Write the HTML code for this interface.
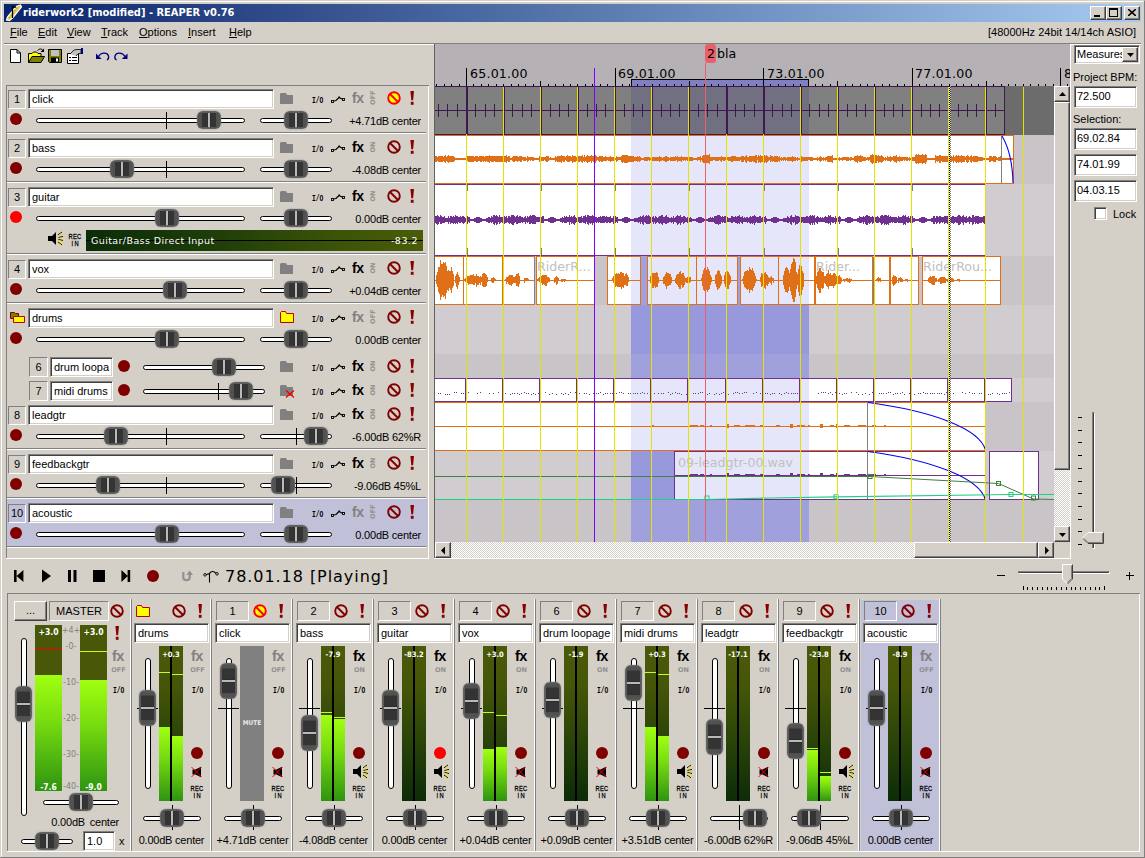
<!DOCTYPE html><html><head><meta charset="utf-8"><title>riderwork2 [modified] - REAPER v0.76</title><style>
*{box-sizing:border-box;margin:0;padding:0}
html,body{width:1145px;height:858px;overflow:hidden;background:#d4d0c8}
body{position:relative;font-family:"Liberation Sans",sans-serif;font-size:11px;color:#000;line-height:13px}
.a{position:absolute}
.t{position:absolute;white-space:pre}
.mi::first-letter{text-decoration:underline}
.fld{position:absolute;background:#fff;border:1px solid;border-color:#808080 #fff #fff #808080;box-shadow:inset 1px 1px 0 #404040,inset -1px -1px 0 #d4d0c8;padding:3px 0 0 3px;white-space:pre;overflow:hidden}
.num{position:absolute;border:1px solid;border-color:#808080 #fff #fff #808080;text-align:center;padding-top:2px}
.btn{position:absolute;background:#d4d0c8;border:1px solid;border-color:#fff #404040 #404040 #fff;box-shadow:inset -1px -1px 0 #808080,inset 1px 1px 0 #d4d0c8}
.hs{position:absolute;height:5px;background:#fff;border:1px solid #000;border-radius:3px}
.vs{position:absolute;width:6px;background:#fff;border:1px solid #000;border-radius:3px}
.kh{position:absolute;width:24px;height:18px;border-radius:6px;background:linear-gradient(180deg,#646464 0,#5c5c5c 9%,rgba(80,80,80,0) 13%,rgba(80,80,80,0) 89%,#5a5a5a 92%,#666 100%),linear-gradient(90deg,#6c6c6c 0,#545454 6%,#505050 19%,#343434 22%,#343434 43%,#262626 45%,#bababa 46.500%,#bababa 54%,#262626 55.500%,#343434 57%,#343434 77%,#505050 80%,#545454 94%,#6c6c6c 100%);box-shadow:0 0 1.500px 0 #787878}
.kv{position:absolute;width:17px;height:36px;border-radius:6px;background:linear-gradient(90deg,#646464 0,#5c5c5c 9%,rgba(80,80,80,0) 14%,rgba(80,80,80,0) 87%,#5a5a5a 91%,#666 100%),linear-gradient(180deg,#6c6c6c 0,#545454 5%,#505050 14%,#343434 17%,#343434 45%,#262626 46.500%,#bababa 47.500%,#bababa 52.500%,#262626 53.500%,#343434 55%,#343434 82%,#505050 85%,#545454 95%,#6c6c6c 100%);box-shadow:0 0 1.500px 0 #787878}
.tk{position:absolute;background:#000}
.chk{background-color:#fff;background-image:conic-gradient(#d4d0c8 25%,#fff 0 50%,#d4d0c8 0 75%,#fff 0);background-size:2px 2px}
.rec{position:absolute;width:12px;height:12px;border-radius:6px;background:#800000}
.rec.on{background:#ff0000}
.sepd{position:absolute;height:1px;background:#808080}
.sepl{position:absolute;height:1px;background:#fff}
.fx{position:absolute;font-weight:bold;font-size:14.5px;line-height:15px;letter-spacing:-0.5px;white-space:pre}
.io{position:absolute;font-family:"Liberation Mono",monospace;font-weight:bold;font-size:9.5px;line-height:10px;transform-origin:0 0;transform:scaleX(.66);white-space:pre}
.sm{position:absolute;font-family:"DejaVu Sans",sans-serif;font-weight:bold;font-size:6.5px;line-height:6px;color:#909090;white-space:pre;letter-spacing:.1px}
.ri{position:absolute;font-family:"Liberation Sans",sans-serif;font-size:8px;line-height:7px;color:#000;white-space:pre;text-align:center;width:24px;letter-spacing:.3px;-webkit-text-stroke:.3px #000;transform:scaleX(.72)}
.yl{position:absolute;width:1px;background:#e3e300}
.pk{position:absolute;font-family:"DejaVu Sans Condensed","DejaVu Sans",sans-serif;font-weight:bold;color:#fff;font-size:7.5px;line-height:8px;white-space:pre;text-align:center}
.sc{position:absolute;font-family:"DejaVu Sans",sans-serif;color:#808080;font-size:8px;line-height:8px;white-space:pre;text-align:center;width:20px}
.mt{position:absolute;background:linear-gradient(180deg,#4a5a08 0,#465608 25%,#2a4408 60%,#0c2c08 100%)}
.mg{position:absolute;background:linear-gradient(180deg,#a0ff10 0,#78dc10 40%,#2e9410 100%)}
.lb{position:absolute;font-family:"DejaVu Sans",sans-serif;font-size:12.6px;line-height:13px;white-space:pre}
</style></head><body>
<div class="a" style="left:0;top:0;width:1145px;height:858px;border:1px solid;border-color:#d4d0c8 #808080 #808080 #d4d0c8"></div>
<div class="a" style="left:1px;top:1px;width:1143px;height:856px;border:1px solid;border-color:#fff #d4d0c8 #d4d0c8 #fff"></div>
<div class="a" style="left:4px;top:4px;width:1137px;height:18px;background:linear-gradient(90deg,#0a246a 0,#a6caf0 100%)"></div>
<svg class="a" style="left:5px;top:4px" width="18" height="18" viewBox="0 0 18 18"><path d="M1.5 16 L2.5 13 L11 2.5 L15.5 1 L16.5 3 L8 13.5 L4.5 16.5 Z" fill="#e6c85a" stroke="#fff" stroke-width="1.2"/><path d="M4 14 L13 3" stroke="#9ab040" stroke-width="1.5" stroke-dasharray="1 2"/><path d="M7.5 14 V3 H11" fill="none" stroke="#000" stroke-width="1.3"/></svg>
<div class="t" style="left:23px;top:6px;font-family:DejaVu Sans Condensed,DejaVu Sans,sans-serif;font-weight:bold;color:#fff;font-size:11px;line-height:14px">riderwork2 [modified] - REAPER v0.76</div>
<div class="btn" style="left:1090px;top:6px;width:16px;height:14px"></div>
<div class="a" style="left:1094px;top:15px;width:6px;height:2px;background:#000;"></div>
<div class="btn" style="left:1106px;top:6px;width:16px;height:14px"></div>
<div class="a" style="left:1109px;top:8px;width:9px;height:9px;border:1px solid #000;border-top-width:2px"></div>
<div class="btn" style="left:1124px;top:6px;width:16px;height:14px"></div>
<svg class="a" style="left:1128px;top:9px" width="8" height="7" viewBox="0 0 8 7"><path d="M0 0 L8 7 M8 0 L0 7" stroke="#000" stroke-width="1.6" fill="none"/></svg>
<div class="t mi" style="left:10px;top:26px;">File</div>
<div class="t mi" style="left:38px;top:26px;">Edit</div>
<div class="t mi" style="left:67px;top:26px;">View</div>
<div class="t mi" style="left:101px;top:26px;">Track</div>
<div class="t mi" style="left:139px;top:26px;">Options</div>
<div class="t mi" style="left:188px;top:26px;">Insert</div>
<div class="t mi" style="left:229px;top:26px;">Help</div>
<div class="t" style="left:0px;top:26px;left:auto;right:9px">[48000Hz 24bit 14/14ch ASIO]</div>
<div class="a" style="left:4px;top:43px;width:1137px;height:1px;background:#808080;"></div>
<div class="a" style="left:4px;top:44px;width:1137px;height:1px;background:#fff;"></div>
<svg class="a" style="left:8px;top:47px" width="125" height="18" viewBox="0 0 125 18"><path d="M2.5 2.5 H9 L12.5 6 V15.5 H2.5 Z" fill="#fff" stroke="#000"/><path d="M9 2.5 V6 H12.5" fill="none" stroke="#000"/><path d="M20.500 15.500 V6.500 H24 L25.500 5 H28.500 L30 6.500 H33 V9.500" fill="#ffff00" stroke="#000"/><path d="M20.500 15.500 L24 9.500 H36.500 L33 15.500 Z" fill="#808000" stroke="#000"/><path d="M29.500 3.500 C31.500 1.500 33.500 1.500 35 3.500" stroke="#000" fill="none"/><path d="M36 1.500 V5 H32.500 Z" fill="#000"/><path d="M40.500 2.500 H53.500 V15.500 H41.500 L40.500 14.500 Z" fill="#808000" stroke="#000"/><rect x="43" y="3" width="8" height="6" fill="#c0c0c0"/><rect x="43" y="10.500" width="8" height="5" fill="#000"/><rect x="48" y="11.500" width="2" height="3" fill="#fff"/><path d="M59.500 6.500 H70.500 V16.500 H59.500 Z" fill="#fff" stroke="#000"/><path d="M61 10.500 H63 M64 10.500 H69 M61 13.500 H63 M64 13.500 H69" stroke="#000"/><path d="M62 7 L66 3 L69 2.500 H73 V6.500 H70.500 L68 9" fill="#c0c0c0" stroke="#000" stroke-width=".8"/><rect x="73" y="1" width="2" height="6" fill="#000080"/><path d="M90.500 9.500 C93 5 99.500 5 100.500 9 C101 11 100 12.500 99 13" stroke="#000080" stroke-width="1.300" fill="none"/><path d="M88 6.500 V12 H93.700 Z" fill="#000080"/><path d="M117 9.500 C114.500 5 108 5 107 9 C106.500 11 107.500 12.500 108.500 13" stroke="#000080" stroke-width="1.300" fill="none"/><path d="M119.500 6.500 V12 H113.800 Z" fill="#000080"/></svg>
<div class="a" style="left:6px;top:85px;width:423px;height:1px;background:#808080;"></div>
<div class="a" style="left:6px;top:85px;width:1px;height:474px;background:#808080;"></div>
<div class="a" style="left:428px;top:86px;width:1px;height:473px;background:#fff;"></div>
<div class="a" style="left:6px;top:558px;width:423px;height:1px;background:#fff;"></div>
<div class="num" style="left:8px;top:90px;width:18px;height:19px">1</div>
<div class="fld" style="left:28px;top:89px;width:246px;height:20px">click</div>
<svg class="a" style="left:280px;top:93px" width="14" height="12" viewBox="0 0 14 12"><path d="M0 11 V1 L1 0 H6 L7 2 H13 V11 Z" fill="#808080"/></svg>
<div class="io" style="left:312px;top:96px;">I/O</div>
<svg class="a" style="left:331px;top:96px" width="15" height="8" viewBox="0 0 15 8"><path d="M2.500 5 L5 4.500 L8 1.500 L11.500 3.200" stroke="#000" stroke-width="1.200" fill="none"/><rect x="0.500" y="4.500" width="2" height="2" fill="#d4d0c8" stroke="#000" stroke-width=".9"/><rect x="11.500" y="2.500" width="2" height="2" fill="#d4d0c8" stroke="#000" stroke-width=".9"/><rect x="7.500" y="0.500" width="1.500" height="1.500" fill="#000"/></svg>
<div class="fx" style="left:352px;top:91px;color:#808080;font-size:14px">fx</div>
<div class="sm" style="left:370px;top:91px;width:14px;height:6px;text-align:center;transform-origin:0 0;transform:translate(0,14px) rotate(-90deg)">OFF</div>
<svg class="a" style="left:385.5px;top:90px" width="16" height="16" viewBox="0 0 16 16"><circle cx="8" cy="8" r="5.8" fill="#ffff00" stroke="#ff0000" stroke-width="1.9"/><path d="M4 4 L12 12" stroke="#ff0000" stroke-width="1.9"/></svg>
<svg class="a" style="left:410px;top:91px" width="5" height="14" viewBox="0 0 5 14" preserveAspectRatio="none"><path d="M0.4 0 H4 L3.1 9.3 H1.3 Z" fill="#880000"/><rect x="0.8" y="10.8" width="2.8" height="3" fill="#880000"/></svg>
<div class="rec" style="left:10px;top:113px"></div>
<div class="hs" style="left:36px;top:118px;width:209px"></div>
<div class="tk" style="left:166px;top:112px;width:1px;height:17px"></div>
<div class="kh" style="left:197px;top:111px"></div>
<div class="hs" style="left:260px;top:118px;width:72px"></div>
<div class="kh" style="left:284px;top:111px"></div>
<div class="t" style="left:0px;top:115px;left:auto;right:724px;text-align:right;letter-spacing:-.22px">+4.71dB center</div>
<div class="a" style="left:7px;top:132px;width:419px;height:1px;background:#808080;"></div>
<div class="a" style="left:7px;top:133px;width:419px;height:1px;background:#fff;"></div>
<div class="num" style="left:8px;top:139px;width:18px;height:19px">2</div>
<div class="fld" style="left:28px;top:138px;width:246px;height:20px">bass</div>
<svg class="a" style="left:280px;top:142px" width="14" height="12" viewBox="0 0 14 12"><path d="M0 11 V1 L1 0 H6 L7 2 H13 V11 Z" fill="#808080"/></svg>
<div class="io" style="left:312px;top:145px;">I/O</div>
<svg class="a" style="left:331px;top:145px" width="15" height="8" viewBox="0 0 15 8"><path d="M2.500 5 L5 4.500 L8 1.500 L11.500 3.200" stroke="#000" stroke-width="1.200" fill="none"/><rect x="0.500" y="4.500" width="2" height="2" fill="#d4d0c8" stroke="#000" stroke-width=".9"/><rect x="11.500" y="2.500" width="2" height="2" fill="#d4d0c8" stroke="#000" stroke-width=".9"/><rect x="7.500" y="0.500" width="1.500" height="1.500" fill="#000"/></svg>
<div class="fx" style="left:352px;top:140px;color:#000;font-size:14px">fx</div>
<div class="sm" style="left:370px;top:140px;width:14px;height:6px;text-align:center;transform-origin:0 0;transform:translate(0,14px) rotate(-90deg)">ON</div>
<svg class="a" style="left:385.5px;top:139px" width="16" height="16" viewBox="0 0 16 16"><circle cx="8" cy="8" r="5.8" fill="none" stroke="#800000" stroke-width="1.9"/><path d="M4 4 L12 12" stroke="#800000" stroke-width="1.9"/></svg>
<svg class="a" style="left:410px;top:140px" width="5" height="14" viewBox="0 0 5 14" preserveAspectRatio="none"><path d="M0.4 0 H4 L3.1 9.3 H1.3 Z" fill="#880000"/><rect x="0.8" y="10.8" width="2.8" height="3" fill="#880000"/></svg>
<div class="rec" style="left:10px;top:162px"></div>
<div class="hs" style="left:36px;top:167px;width:209px"></div>
<div class="tk" style="left:166px;top:161px;width:1px;height:17px"></div>
<div class="kh" style="left:110px;top:160px"></div>
<div class="hs" style="left:260px;top:167px;width:72px"></div>
<div class="kh" style="left:284px;top:160px"></div>
<div class="t" style="left:0px;top:164px;left:auto;right:724px;text-align:right;letter-spacing:-.22px">-4.08dB center</div>
<div class="a" style="left:7px;top:181px;width:419px;height:1px;background:#808080;"></div>
<div class="a" style="left:7px;top:182px;width:419px;height:1px;background:#fff;"></div>
<div class="num" style="left:8px;top:188px;width:18px;height:19px">3</div>
<div class="fld" style="left:28px;top:187px;width:246px;height:20px">guitar</div>
<svg class="a" style="left:280px;top:191px" width="14" height="12" viewBox="0 0 14 12"><path d="M0 11 V1 L1 0 H6 L7 2 H13 V11 Z" fill="#808080"/></svg>
<div class="io" style="left:312px;top:194px;">I/O</div>
<svg class="a" style="left:331px;top:194px" width="15" height="8" viewBox="0 0 15 8"><path d="M2.500 5 L5 4.500 L8 1.500 L11.500 3.200" stroke="#000" stroke-width="1.200" fill="none"/><rect x="0.500" y="4.500" width="2" height="2" fill="#d4d0c8" stroke="#000" stroke-width=".9"/><rect x="11.500" y="2.500" width="2" height="2" fill="#d4d0c8" stroke="#000" stroke-width=".9"/><rect x="7.500" y="0.500" width="1.500" height="1.500" fill="#000"/></svg>
<div class="fx" style="left:352px;top:189px;color:#000;font-size:14px">fx</div>
<div class="sm" style="left:370px;top:189px;width:14px;height:6px;text-align:center;transform-origin:0 0;transform:translate(0,14px) rotate(-90deg)">ON</div>
<svg class="a" style="left:385.5px;top:188px" width="16" height="16" viewBox="0 0 16 16"><circle cx="8" cy="8" r="5.8" fill="none" stroke="#800000" stroke-width="1.9"/><path d="M4 4 L12 12" stroke="#800000" stroke-width="1.9"/></svg>
<svg class="a" style="left:410px;top:189px" width="5" height="14" viewBox="0 0 5 14" preserveAspectRatio="none"><path d="M0.4 0 H4 L3.1 9.3 H1.3 Z" fill="#880000"/><rect x="0.8" y="10.8" width="2.8" height="3" fill="#880000"/></svg>
<div class="rec on" style="left:10px;top:211px"></div>
<div class="hs" style="left:36px;top:216px;width:209px"></div>
<div class="kh" style="left:155px;top:209px"></div>
<div class="hs" style="left:260px;top:216px;width:72px"></div>
<div class="kh" style="left:284px;top:209px"></div>
<div class="t" style="left:0px;top:213px;left:auto;right:724px;text-align:right;letter-spacing:-.22px">0.00dB center</div>
<div class="a" style="left:7px;top:253px;width:419px;height:1px;background:#808080;"></div>
<div class="a" style="left:7px;top:254px;width:419px;height:1px;background:#fff;"></div>
<svg class="a" style="left:48px;top:231px" width="16" height="16" viewBox="0 0 16 16"><path d="M0 5 H4 L8 1 V14 L4 10 H0 Z" fill="#000"/><path d="M10 4 L14 1 M10.5 6.5 L15 5.5 M10.5 8.5 L15 9.5 M10 11 L14 14" stroke="#000" stroke-width="1"/><path d="M10 5 L14 2 M10.5 7.5 L15 6.5 M10.5 9.5 L15 10.5 M10 12 L14 15" stroke="#f0e000" stroke-width="1"/></svg>
<div class="ri" style="left:63px;top:233px">REC<br><span style="letter-spacing:2px;margin-left:2px">IN</span></div>
<div class="a" style="left:86px;top:230px;width:337px;height:21px;background:linear-gradient(90deg,#0c2c08 0,#1c3c08 35%,#3c5408 75%,#4a5c08 100%)"></div>
<div class="a" style="left:86px;top:240px;width:337px;height:1px;background:#000;"></div>
<div class="t" style="left:91px;top:235px;font-family:DejaVu Sans,sans-serif;font-size:9.5px;line-height:12px;color:#fff;letter-spacing:.4px">Guitar/Bass Direct Input</div>
<div class="t" style="left:0px;top:235px;left:auto;right:727px;font-family:DejaVu Sans,sans-serif;font-size:9.5px;line-height:12px;color:#fff;letter-spacing:.5px">-83.2</div>
<div class="num" style="left:8px;top:260px;width:18px;height:19px">4</div>
<div class="fld" style="left:28px;top:259px;width:246px;height:20px">vox</div>
<svg class="a" style="left:280px;top:263px" width="14" height="12" viewBox="0 0 14 12"><path d="M0 11 V1 L1 0 H6 L7 2 H13 V11 Z" fill="#808080"/></svg>
<div class="io" style="left:312px;top:266px;">I/O</div>
<svg class="a" style="left:331px;top:266px" width="15" height="8" viewBox="0 0 15 8"><path d="M2.500 5 L5 4.500 L8 1.500 L11.500 3.200" stroke="#000" stroke-width="1.200" fill="none"/><rect x="0.500" y="4.500" width="2" height="2" fill="#d4d0c8" stroke="#000" stroke-width=".9"/><rect x="11.500" y="2.500" width="2" height="2" fill="#d4d0c8" stroke="#000" stroke-width=".9"/><rect x="7.500" y="0.500" width="1.500" height="1.500" fill="#000"/></svg>
<div class="fx" style="left:352px;top:261px;color:#000;font-size:14px">fx</div>
<div class="sm" style="left:370px;top:261px;width:14px;height:6px;text-align:center;transform-origin:0 0;transform:translate(0,14px) rotate(-90deg)">ON</div>
<svg class="a" style="left:385.5px;top:260px" width="16" height="16" viewBox="0 0 16 16"><circle cx="8" cy="8" r="5.8" fill="none" stroke="#800000" stroke-width="1.9"/><path d="M4 4 L12 12" stroke="#800000" stroke-width="1.9"/></svg>
<svg class="a" style="left:410px;top:261px" width="5" height="14" viewBox="0 0 5 14" preserveAspectRatio="none"><path d="M0.4 0 H4 L3.1 9.3 H1.3 Z" fill="#880000"/><rect x="0.8" y="10.8" width="2.8" height="3" fill="#880000"/></svg>
<div class="rec" style="left:10px;top:283px"></div>
<div class="hs" style="left:36px;top:288px;width:209px"></div>
<div class="kh" style="left:163px;top:281px"></div>
<div class="hs" style="left:260px;top:288px;width:72px"></div>
<div class="kh" style="left:284px;top:281px"></div>
<div class="t" style="left:0px;top:285px;left:auto;right:724px;text-align:right;letter-spacing:-.22px">+0.04dB center</div>
<div class="a" style="left:7px;top:302px;width:419px;height:1px;background:#808080;"></div>
<div class="a" style="left:7px;top:303px;width:419px;height:1px;background:#fff;"></div>
<svg class="a" style="left:10px;top:312px" width="15" height="11" viewBox="0 0 15 11"><path d="M0.5 0.5 H4.5 L5.5 1.5 H8.5 V6.5 H0.5 Z" fill="#808000" stroke="#800000"/><path d="M3.5 4.5 H14.5 V10.5 H3.5 Z" fill="#ffff00" stroke="#c00000"/></svg>
<div class="fld" style="left:28px;top:308px;width:246px;height:20px">drums</div>
<svg class="a" style="left:280px;top:311px" width="14" height="12" viewBox="0 0 14 12"><path d="M0.5 11.5 V1.5 L1.5 0.5 H5.5 L6.5 2.5 H13.5 V11.5 Z" fill="#ffff00" stroke="#c00000" stroke-width="1"/></svg>
<div class="io" style="left:312px;top:315px;">I/O</div>
<svg class="a" style="left:331px;top:315px" width="15" height="8" viewBox="0 0 15 8"><path d="M2.500 5 L5 4.500 L8 1.500 L11.500 3.200" stroke="#000" stroke-width="1.200" fill="none"/><rect x="0.500" y="4.500" width="2" height="2" fill="#d4d0c8" stroke="#000" stroke-width=".9"/><rect x="11.500" y="2.500" width="2" height="2" fill="#d4d0c8" stroke="#000" stroke-width=".9"/><rect x="7.500" y="0.500" width="1.500" height="1.500" fill="#000"/></svg>
<div class="fx" style="left:352px;top:310px;color:#808080;font-size:14px">fx</div>
<div class="sm" style="left:370px;top:310px;width:14px;height:6px;text-align:center;transform-origin:0 0;transform:translate(0,14px) rotate(-90deg)">OFF</div>
<svg class="a" style="left:385.5px;top:309px" width="16" height="16" viewBox="0 0 16 16"><circle cx="8" cy="8" r="5.8" fill="none" stroke="#800000" stroke-width="1.9"/><path d="M4 4 L12 12" stroke="#800000" stroke-width="1.9"/></svg>
<svg class="a" style="left:410px;top:310px" width="5" height="14" viewBox="0 0 5 14" preserveAspectRatio="none"><path d="M0.4 0 H4 L3.1 9.3 H1.3 Z" fill="#880000"/><rect x="0.8" y="10.8" width="2.8" height="3" fill="#880000"/></svg>
<div class="rec" style="left:10px;top:332px"></div>
<div class="hs" style="left:36px;top:337px;width:209px"></div>
<div class="kh" style="left:155px;top:330px"></div>
<div class="hs" style="left:260px;top:337px;width:72px"></div>
<div class="kh" style="left:284px;top:330px"></div>
<div class="t" style="left:0px;top:334px;left:auto;right:724px;text-align:right;letter-spacing:-.22px">0.00dB center</div>
<div class="num" style="left:29px;top:357px;width:19px;height:20px;padding-top:3px">6</div>
<div class="fld" style="left:50px;top:357px;width:63px;height:20px">drum loopa</div>
<div class="rec" style="left:118px;top:360px"></div>
<div class="hs" style="left:143px;top:365px;width:122px"></div>
<div class="kh" style="left:212px;top:358px"></div>
<svg class="a" style="left:280px;top:361px" width="14" height="12" viewBox="0 0 14 12"><path d="M0 11 V1 L1 0 H6 L7 2 H13 V11 Z" fill="#808080"/></svg>
<div class="io" style="left:312px;top:364px;">I/O</div>
<svg class="a" style="left:331px;top:364px" width="15" height="8" viewBox="0 0 15 8"><path d="M2.500 5 L5 4.500 L8 1.500 L11.500 3.200" stroke="#000" stroke-width="1.200" fill="none"/><rect x="0.500" y="4.500" width="2" height="2" fill="#d4d0c8" stroke="#000" stroke-width=".9"/><rect x="11.500" y="2.500" width="2" height="2" fill="#d4d0c8" stroke="#000" stroke-width=".9"/><rect x="7.500" y="0.500" width="1.500" height="1.500" fill="#000"/></svg>
<div class="fx" style="left:352px;top:359px;color:#000;font-size:14px">fx</div>
<div class="sm" style="left:370px;top:359px;width:14px;height:6px;text-align:center;transform-origin:0 0;transform:translate(0,14px) rotate(-90deg)">ON</div>
<svg class="a" style="left:385.5px;top:358px" width="16" height="16" viewBox="0 0 16 16"><circle cx="8" cy="8" r="5.8" fill="none" stroke="#800000" stroke-width="1.9"/><path d="M4 4 L12 12" stroke="#800000" stroke-width="1.9"/></svg>
<svg class="a" style="left:410px;top:359px" width="5" height="14" viewBox="0 0 5 14" preserveAspectRatio="none"><path d="M0.4 0 H4 L3.1 9.3 H1.3 Z" fill="#880000"/><rect x="0.8" y="10.8" width="2.8" height="3" fill="#880000"/></svg>
<div class="num" style="left:29px;top:381px;width:19px;height:20px;padding-top:3px">7</div>
<div class="fld" style="left:50px;top:381px;width:63px;height:20px">midi drums</div>
<div class="rec" style="left:118px;top:384px"></div>
<div class="hs" style="left:143px;top:389px;width:122px"></div>
<div class="tk" style="left:218px;top:383px;width:1px;height:17px"></div>
<div class="kh" style="left:229px;top:382px"></div>
<svg class="a" style="left:280px;top:385px" width="14" height="12" viewBox="0 0 14 12"><path d="M0 11 V1 L1 0 H6 L7 2 H13 V11 Z" fill="#808080"/></svg>
<svg class="a" style="left:285px;top:389px" width="10" height="10" viewBox="0 0 10 10"><path d="M1 1.500 L9 8.500 M9 1.500 L1 8.500" stroke="#f00000" stroke-width="1.300"/></svg>
<div class="io" style="left:312px;top:388px;">I/O</div>
<svg class="a" style="left:331px;top:388px" width="15" height="8" viewBox="0 0 15 8"><path d="M2.500 5 L5 4.500 L8 1.500 L11.500 3.200" stroke="#000" stroke-width="1.200" fill="none"/><rect x="0.500" y="4.500" width="2" height="2" fill="#d4d0c8" stroke="#000" stroke-width=".9"/><rect x="11.500" y="2.500" width="2" height="2" fill="#d4d0c8" stroke="#000" stroke-width=".9"/><rect x="7.500" y="0.500" width="1.500" height="1.500" fill="#000"/></svg>
<div class="fx" style="left:352px;top:383px;color:#000;font-size:14px">fx</div>
<div class="sm" style="left:370px;top:383px;width:14px;height:6px;text-align:center;transform-origin:0 0;transform:translate(0,14px) rotate(-90deg)">ON</div>
<svg class="a" style="left:385.5px;top:382px" width="16" height="16" viewBox="0 0 16 16"><circle cx="8" cy="8" r="5.8" fill="none" stroke="#800000" stroke-width="1.9"/><path d="M4 4 L12 12" stroke="#800000" stroke-width="1.9"/></svg>
<svg class="a" style="left:410px;top:383px" width="5" height="14" viewBox="0 0 5 14" preserveAspectRatio="none"><path d="M0.4 0 H4 L3.1 9.3 H1.3 Z" fill="#880000"/><rect x="0.8" y="10.8" width="2.8" height="3" fill="#880000"/></svg>
<div class="num" style="left:8px;top:406px;width:18px;height:19px">8</div>
<div class="fld" style="left:28px;top:405px;width:246px;height:20px">leadgtr</div>
<svg class="a" style="left:280px;top:409px" width="14" height="12" viewBox="0 0 14 12"><path d="M0 11 V1 L1 0 H6 L7 2 H13 V11 Z" fill="#808080"/></svg>
<div class="io" style="left:312px;top:412px;">I/O</div>
<svg class="a" style="left:331px;top:412px" width="15" height="8" viewBox="0 0 15 8"><path d="M2.500 5 L5 4.500 L8 1.500 L11.500 3.200" stroke="#000" stroke-width="1.200" fill="none"/><rect x="0.500" y="4.500" width="2" height="2" fill="#d4d0c8" stroke="#000" stroke-width=".9"/><rect x="11.500" y="2.500" width="2" height="2" fill="#d4d0c8" stroke="#000" stroke-width=".9"/><rect x="7.500" y="0.500" width="1.500" height="1.500" fill="#000"/></svg>
<div class="fx" style="left:352px;top:407px;color:#000;font-size:14px">fx</div>
<div class="sm" style="left:370px;top:407px;width:14px;height:6px;text-align:center;transform-origin:0 0;transform:translate(0,14px) rotate(-90deg)">ON</div>
<svg class="a" style="left:385.5px;top:406px" width="16" height="16" viewBox="0 0 16 16"><circle cx="8" cy="8" r="5.8" fill="none" stroke="#800000" stroke-width="1.9"/><path d="M4 4 L12 12" stroke="#800000" stroke-width="1.9"/></svg>
<svg class="a" style="left:410px;top:407px" width="5" height="14" viewBox="0 0 5 14" preserveAspectRatio="none"><path d="M0.4 0 H4 L3.1 9.3 H1.3 Z" fill="#880000"/><rect x="0.8" y="10.8" width="2.8" height="3" fill="#880000"/></svg>
<div class="rec" style="left:10px;top:429px"></div>
<div class="hs" style="left:36px;top:434px;width:209px"></div>
<div class="tk" style="left:166px;top:428px;width:1px;height:17px"></div>
<div class="kh" style="left:104px;top:427px"></div>
<div class="hs" style="left:260px;top:434px;width:72px"></div>
<div class="tk" style="left:296px;top:428px;width:1px;height:17px"></div>
<div class="kh" style="left:304px;top:427px"></div>
<div class="t" style="left:0px;top:431px;left:auto;right:724px;text-align:right;letter-spacing:-.22px">-6.00dB 62%R</div>
<div class="a" style="left:7px;top:448px;width:419px;height:1px;background:#808080;"></div>
<div class="a" style="left:7px;top:449px;width:419px;height:1px;background:#fff;"></div>
<div class="num" style="left:8px;top:455px;width:18px;height:19px">9</div>
<div class="fld" style="left:28px;top:454px;width:246px;height:20px">feedbackgtr</div>
<svg class="a" style="left:280px;top:458px" width="14" height="12" viewBox="0 0 14 12"><path d="M0 11 V1 L1 0 H6 L7 2 H13 V11 Z" fill="#808080"/></svg>
<div class="io" style="left:312px;top:461px;">I/O</div>
<svg class="a" style="left:331px;top:461px" width="15" height="8" viewBox="0 0 15 8"><path d="M2.500 5 L5 4.500 L8 1.500 L11.500 3.200" stroke="#000" stroke-width="1.200" fill="none"/><rect x="0.500" y="4.500" width="2" height="2" fill="#d4d0c8" stroke="#000" stroke-width=".9"/><rect x="11.500" y="2.500" width="2" height="2" fill="#d4d0c8" stroke="#000" stroke-width=".9"/><rect x="7.500" y="0.500" width="1.500" height="1.500" fill="#000"/></svg>
<div class="fx" style="left:352px;top:456px;color:#000;font-size:14px">fx</div>
<div class="sm" style="left:370px;top:456px;width:14px;height:6px;text-align:center;transform-origin:0 0;transform:translate(0,14px) rotate(-90deg)">ON</div>
<svg class="a" style="left:385.5px;top:455px" width="16" height="16" viewBox="0 0 16 16"><circle cx="8" cy="8" r="5.8" fill="none" stroke="#800000" stroke-width="1.9"/><path d="M4 4 L12 12" stroke="#800000" stroke-width="1.9"/></svg>
<svg class="a" style="left:410px;top:456px" width="5" height="14" viewBox="0 0 5 14" preserveAspectRatio="none"><path d="M0.4 0 H4 L3.1 9.3 H1.3 Z" fill="#880000"/><rect x="0.8" y="10.8" width="2.8" height="3" fill="#880000"/></svg>
<div class="rec" style="left:10px;top:478px"></div>
<div class="hs" style="left:36px;top:483px;width:209px"></div>
<div class="tk" style="left:166px;top:477px;width:1px;height:17px"></div>
<div class="kh" style="left:96px;top:476px"></div>
<div class="hs" style="left:260px;top:483px;width:72px"></div>
<div class="tk" style="left:296px;top:477px;width:1px;height:17px"></div>
<div class="kh" style="left:271px;top:476px"></div>
<div class="t" style="left:0px;top:480px;left:auto;right:724px;text-align:right;letter-spacing:-.22px">-9.06dB 45%L</div>
<div class="a" style="left:7px;top:497px;width:419px;height:1px;background:#808080;"></div>
<div class="a" style="left:7px;top:498px;width:419px;height:1px;background:#fff;"></div>
<div class="a" style="left:7px;top:499px;width:421px;height:48px;background:#c0c0d8;"></div>
<div class="num" style="left:8px;top:504px;width:18px;height:19px">10</div>
<div class="fld" style="left:28px;top:503px;width:246px;height:20px">acoustic</div>
<svg class="a" style="left:280px;top:507px" width="14" height="12" viewBox="0 0 14 12"><path d="M0 11 V1 L1 0 H6 L7 2 H13 V11 Z" fill="#808080"/></svg>
<div class="io" style="left:312px;top:510px;">I/O</div>
<svg class="a" style="left:331px;top:510px" width="15" height="8" viewBox="0 0 15 8"><path d="M2.500 5 L5 4.500 L8 1.500 L11.500 3.200" stroke="#000" stroke-width="1.200" fill="none"/><rect x="0.500" y="4.500" width="2" height="2" fill="#d4d0c8" stroke="#000" stroke-width=".9"/><rect x="11.500" y="2.500" width="2" height="2" fill="#d4d0c8" stroke="#000" stroke-width=".9"/><rect x="7.500" y="0.500" width="1.500" height="1.500" fill="#000"/></svg>
<div class="fx" style="left:352px;top:505px;color:#808080;font-size:14px">fx</div>
<div class="sm" style="left:370px;top:505px;width:14px;height:6px;text-align:center;transform-origin:0 0;transform:translate(0,14px) rotate(-90deg)">OFF</div>
<svg class="a" style="left:385.5px;top:504px" width="16" height="16" viewBox="0 0 16 16"><circle cx="8" cy="8" r="5.8" fill="none" stroke="#800000" stroke-width="1.9"/><path d="M4 4 L12 12" stroke="#800000" stroke-width="1.9"/></svg>
<svg class="a" style="left:410px;top:505px" width="5" height="14" viewBox="0 0 5 14" preserveAspectRatio="none"><path d="M0.4 0 H4 L3.1 9.3 H1.3 Z" fill="#880000"/><rect x="0.8" y="10.8" width="2.8" height="3" fill="#880000"/></svg>
<div class="rec" style="left:10px;top:527px"></div>
<div class="hs" style="left:36px;top:532px;width:209px"></div>
<div class="kh" style="left:155px;top:525px"></div>
<div class="hs" style="left:260px;top:532px;width:72px"></div>
<div class="kh" style="left:284px;top:525px"></div>
<div class="t" style="left:0px;top:529px;left:auto;right:724px;text-align:right;letter-spacing:-.22px">0.00dB center</div>
<div class="a" style="left:7px;top:546px;width:419px;height:1px;background:#808080;"></div>
<div class="a" style="left:7px;top:547px;width:419px;height:1px;background:#fff;"></div>
<div class="a" style="left:434px;top:44px;width:1px;height:515px;background:#606060;"></div>
<div class="a" style="left:1070px;top:45px;width:1px;height:514px;background:#fff;"></div>
<div class="a" style="left:434px;top:558px;width:637px;height:1px;background:#fff;"></div>
<div class="a" style="left:435px;top:44px;width:635px;height:42px;background:#b5b1b5;"></div>
<div class="a" style="left:631px;top:79px;width:178px;height:7px;background:#8080c0;border:1px solid #000;border-bottom:none"></div>
<svg class="a" style="left:0;top:0" width="1145" height="90" viewBox="0 0 1145 90"><path d="M436.5 84V86M444.5 84V86M451.5 84V86M459.5 84V86M466.5 68V86M473.5 84V86M481.5 84V86M488.5 84V86M496.5 84V86M503.5 84V86M511.5 84V86M518.5 84V86M525.5 84V86M533.5 84V86M540.5 81V86M548.5 84V86M555.5 84V86M563.5 84V86M570.5 84V86M577.5 84V86M585.5 84V86M592.5 84V86M600.5 84V86M607.5 84V86M615.5 68V86M622.5 84V86M629.5 84V86M637.5 84V86M644.5 84V86M652.5 84V86M659.5 84V86M666.5 84V86M674.5 84V86M681.5 84V86M689.5 81V86M696.5 84V86M704.5 84V86M711.5 84V86M718.5 84V86M726.5 84V86M733.5 84V86M741.5 84V86M748.5 84V86M756.5 84V86M763.5 68V86M770.5 84V86M778.5 84V86M785.5 84V86M793.5 84V86M800.5 84V86M808.5 84V86M815.5 84V86M822.5 84V86M830.5 84V86M837.5 81V86M845.5 84V86M852.5 84V86M860.5 84V86M867.5 84V86M874.5 84V86M882.5 84V86M889.5 84V86M897.5 84V86M904.5 84V86M912.5 68V86M919.5 84V86M926.5 84V86M934.5 84V86M941.5 84V86M949.5 84V86M956.5 84V86M963.5 84V86M971.5 84V86M978.5 84V86M986.5 81V86M993.5 84V86M1001.5 84V86M1008.5 84V86M1015.5 84V86M1023.5 84V86M1030.5 84V86M1038.5 84V86M1045.5 84V86M1053.5 84V86M1060.5 68V86M1067.5 84V86" stroke="#000" stroke-width="1" fill="none" shape-rendering="crispEdges"/></svg>
<div class="lb" style="left:470px;top:67px;letter-spacing:.2px">65.01.00</div>
<div class="lb" style="left:618px;top:67px;letter-spacing:.2px">69.01.00</div>
<div class="lb" style="left:767px;top:67px;letter-spacing:.2px">73.01.00</div>
<div class="lb" style="left:915px;top:67px;letter-spacing:.2px">77.01.00</div>
<div class="a" style="left:1064px;top:66px;width:6px;height:14px;overflow:hidden"><div class="lb" style="left:0;top:1px">81.01.00</div></div>
<div class="a" style="left:705px;top:44px;width:11px;height:19px;background:#ea6068;border-radius:3px"></div>
<div class="lb" style="left:707px;top:47px;">2</div>
<div class="lb" style="left:717px;top:47px;">bla</div>
<div class="a" style="left:435px;top:86px;width:619px;height:49px;background:#6c6c6c;"></div>
<div class="a" style="left:631px;top:86px;width:178px;height:49px;background:#6c6c6c;"></div>
<div class="a" style="left:435px;top:135px;width:619px;height:49px;background:#c8c4c8;"></div>
<div class="a" style="left:631px;top:135px;width:178px;height:49px;background:#a0a0dc;"></div>
<div class="a" style="left:435px;top:184px;width:619px;height:72px;background:#d0ccd0;"></div>
<div class="a" style="left:631px;top:184px;width:178px;height:72px;background:#9898dc;"></div>
<div class="a" style="left:435px;top:256px;width:619px;height:49px;background:#c8c4c8;"></div>
<div class="a" style="left:631px;top:256px;width:178px;height:49px;background:#a0a0dc;"></div>
<div class="a" style="left:435px;top:305px;width:619px;height:49px;background:#d0ccd0;"></div>
<div class="a" style="left:631px;top:305px;width:178px;height:49px;background:#9898dc;"></div>
<div class="a" style="left:435px;top:354px;width:619px;height:24px;background:#c8c4c8;"></div>
<div class="a" style="left:631px;top:354px;width:178px;height:24px;background:#a0a0dc;"></div>
<div class="a" style="left:435px;top:378px;width:619px;height:24px;background:#d0ccd0;"></div>
<div class="a" style="left:631px;top:378px;width:178px;height:24px;background:#9898dc;"></div>
<div class="a" style="left:435px;top:402px;width:619px;height:49px;background:#c8c4c8;"></div>
<div class="a" style="left:631px;top:402px;width:178px;height:49px;background:#a0a0dc;"></div>
<div class="a" style="left:435px;top:451px;width:619px;height:49px;background:#d0ccd0;"></div>
<div class="a" style="left:631px;top:451px;width:178px;height:49px;background:#9898dc;"></div>
<div class="a" style="left:435px;top:500px;width:619px;height:42px;background:#c8c4c8;"></div>
<div class="a" style="left:631px;top:500px;width:178px;height:42px;background:#a0a0dc;"></div>
<div class="a" style="left:435px;top:86px;width:570px;height:49px;background:#808080;"></div>
<div class="a" style="left:631px;top:86px;width:178px;height:49px;background:#707080;"></div>
<div class="a" style="left:435px;top:86px;width:570px;height:49px;border-top:1px solid #401850;border-bottom:1px solid #401850;border-right:1px solid #401850;"></div>
<div class="a" style="left:466px;top:87px;width:2px;height:47px;background:#401850;"></div>
<div class="a" style="left:763px;top:87px;width:2px;height:47px;background:#401850;"></div>
<div class="a" style="left:726px;top:87px;width:1px;height:47px;background:#401850;"></div>
<div class="a" style="left:435px;top:135px;width:579px;height:49px;background:#fff;"></div>
<div class="a" style="left:631px;top:135px;width:178px;height:49px;background:#e6e6fa;"></div>
<div class="a" style="left:435px;top:135px;width:579px;height:49px;border-top:1px solid #e07018;border-bottom:1px solid #e07018;border-right:1px solid #e07018;"></div>
<div class="a" style="left:435px;top:184px;width:551px;height:72px;background:#fff;"></div>
<div class="a" style="left:631px;top:184px;width:178px;height:72px;background:#e6e6fa;"></div>
<div class="a" style="left:435px;top:184px;width:551px;height:72px;border-top:1px solid #703090;border-bottom:1px solid #703090;border-right:1px solid #703090;"></div>
<div class="a" style="left:435px;top:183px;width:551px;height:1px;background:#e07018;"></div>
<div class="a" style="left:1001px;top:158px;width:12px;height:2px;background:#e07018;"></div>
<div class="a" style="left:435px;top:256px;width:29px;height:49px;background:#fff;"></div>
<div class="a" style="left:435px;top:256px;width:29px;height:49px;border-top:1px solid #e07018;border-bottom:1px solid #e07018;border-right:1px solid #e07018;"></div>
<div class="a" style="left:463px;top:256px;width:40px;height:49px;background:#fff;"></div>
<div class="a" style="left:463px;top:256px;width:40px;height:49px;border-top:1px solid #e07018;border-bottom:1px solid #e07018;border-left:1px solid #e07018;border-right:1px solid #e07018;"></div>
<div class="a" style="left:502px;top:256px;width:33px;height:49px;background:#fff;"></div>
<div class="a" style="left:502px;top:256px;width:33px;height:49px;border-top:1px solid #e07018;border-bottom:1px solid #e07018;border-left:1px solid #e07018;border-right:1px solid #e07018;"></div>
<div class="a" style="left:536px;top:256px;width:59px;height:49px;background:#fff;"></div>
<div class="a" style="left:536px;top:256px;width:59px;height:49px;border-top:1px solid #e07018;border-bottom:1px solid #e07018;border-left:1px solid #e07018;border-right:1px solid #e07018;"></div>
<div class="lb" style="left:537px;top:260px;color:#c0c0c0">RiderR...</div>
<div class="a" style="left:607px;top:256px;width:34px;height:49px;background:#fff;"></div>
<div class="a" style="left:631px;top:256px;width:10px;height:49px;background:#e6e6fa;"></div>
<div class="a" style="left:607px;top:256px;width:34px;height:49px;border-top:1px solid #e07018;border-bottom:1px solid #e07018;border-left:1px solid #e07018;border-right:1px solid #e07018;"></div>
<div class="a" style="left:647px;top:256px;width:50px;height:49px;background:#fff;"></div>
<div class="a" style="left:647px;top:256px;width:50px;height:49px;background:#e6e6fa;"></div>
<div class="a" style="left:647px;top:256px;width:50px;height:49px;border-top:1px solid #e07018;border-bottom:1px solid #e07018;border-left:1px solid #e07018;border-right:1px solid #e07018;"></div>
<div class="a" style="left:696px;top:256px;width:42px;height:49px;background:#fff;"></div>
<div class="a" style="left:696px;top:256px;width:42px;height:49px;background:#e6e6fa;"></div>
<div class="a" style="left:696px;top:256px;width:42px;height:49px;border-top:1px solid #e07018;border-bottom:1px solid #e07018;border-left:1px solid #e07018;border-right:1px solid #e07018;"></div>
<div class="a" style="left:740px;top:256px;width:39px;height:49px;background:#fff;"></div>
<div class="a" style="left:740px;top:256px;width:39px;height:49px;background:#e6e6fa;"></div>
<div class="a" style="left:740px;top:256px;width:39px;height:49px;border-top:1px solid #e07018;border-bottom:1px solid #e07018;border-left:1px solid #e07018;border-right:1px solid #e07018;"></div>
<div class="a" style="left:778px;top:256px;width:37px;height:49px;background:#fff;"></div>
<div class="a" style="left:778px;top:256px;width:31px;height:49px;background:#e6e6fa;"></div>
<div class="a" style="left:778px;top:256px;width:37px;height:49px;border-top:1px solid #e07018;border-bottom:1px solid #e07018;border-left:1px solid #e07018;border-right:1px solid #e07018;"></div>
<div class="a" style="left:815px;top:256px;width:58px;height:49px;background:#fff;"></div>
<div class="a" style="left:815px;top:256px;width:58px;height:49px;border-top:1px solid #e07018;border-bottom:1px solid #e07018;border-left:1px solid #e07018;border-right:1px solid #e07018;"></div>
<div class="lb" style="left:816px;top:260px;color:#c0c0c0">Rider...</div>
<div class="a" style="left:874px;top:256px;width:16px;height:49px;background:#fff;"></div>
<div class="a" style="left:874px;top:256px;width:16px;height:49px;border-top:1px solid #e07018;border-bottom:1px solid #e07018;border-left:1px solid #e07018;border-right:1px solid #e07018;"></div>
<div class="a" style="left:890px;top:256px;width:29px;height:49px;background:#fff;"></div>
<div class="a" style="left:890px;top:256px;width:29px;height:49px;border-top:1px solid #e07018;border-bottom:1px solid #e07018;border-left:1px solid #e07018;border-right:1px solid #e07018;"></div>
<div class="a" style="left:922px;top:256px;width:79px;height:49px;background:#fff;"></div>
<div class="a" style="left:922px;top:256px;width:79px;height:49px;border-top:1px solid #e07018;border-bottom:1px solid #e07018;border-left:1px solid #e07018;border-right:1px solid #e07018;"></div>
<div class="lb" style="left:923px;top:260px;color:#c0c0c0">RiderRou...</div>
<div class="a" style="left:534px;top:257px;width:1px;height:47px;background:#808080;"></div>
<div class="a" style="left:873px;top:257px;width:1px;height:47px;background:#808080;"></div>
<div class="a" style="left:435px;top:378px;width:31px;height:24px;background:#fff;"></div>
<div class="a" style="left:435px;top:378px;width:31px;height:24px;border-top:1px solid #703090;border-bottom:1px solid #703090;border-right:1px solid #703090;"></div>
<div class="a" style="left:465px;top:378px;width:38px;height:24px;background:#fff;"></div>
<div class="a" style="left:465px;top:378px;width:38px;height:24px;border-top:1px solid #703090;border-bottom:1px solid #703090;border-left:1px solid #703090;border-right:1px solid #703090;"></div>
<div class="a" style="left:502px;top:378px;width:38px;height:24px;background:#fff;"></div>
<div class="a" style="left:502px;top:378px;width:38px;height:24px;border-top:1px solid #703090;border-bottom:1px solid #703090;border-left:1px solid #703090;border-right:1px solid #703090;"></div>
<div class="a" style="left:539px;top:378px;width:38px;height:24px;background:#fff;"></div>
<div class="a" style="left:539px;top:378px;width:38px;height:24px;border-top:1px solid #703090;border-bottom:1px solid #703090;border-left:1px solid #703090;border-right:1px solid #703090;"></div>
<div class="a" style="left:576px;top:378px;width:38px;height:24px;background:#fff;"></div>
<div class="a" style="left:576px;top:378px;width:38px;height:24px;border-top:1px solid #703090;border-bottom:1px solid #703090;border-left:1px solid #703090;border-right:1px solid #703090;"></div>
<div class="a" style="left:613px;top:378px;width:38px;height:24px;background:#fff;"></div>
<div class="a" style="left:631px;top:378px;width:20px;height:24px;background:#e6e6fa;"></div>
<div class="a" style="left:613px;top:378px;width:38px;height:24px;border-top:1px solid #703090;border-bottom:1px solid #703090;border-left:1px solid #703090;border-right:1px solid #703090;"></div>
<div class="a" style="left:650px;top:378px;width:38px;height:24px;background:#fff;"></div>
<div class="a" style="left:650px;top:378px;width:38px;height:24px;background:#e6e6fa;"></div>
<div class="a" style="left:650px;top:378px;width:38px;height:24px;border-top:1px solid #703090;border-bottom:1px solid #703090;border-left:1px solid #703090;border-right:1px solid #703090;"></div>
<div class="a" style="left:687px;top:378px;width:39px;height:24px;background:#fff;"></div>
<div class="a" style="left:687px;top:378px;width:39px;height:24px;background:#e6e6fa;"></div>
<div class="a" style="left:687px;top:378px;width:39px;height:24px;border-top:1px solid #703090;border-bottom:1px solid #703090;border-left:1px solid #703090;border-right:1px solid #703090;"></div>
<div class="a" style="left:725px;top:378px;width:38px;height:24px;background:#fff;"></div>
<div class="a" style="left:725px;top:378px;width:38px;height:24px;background:#e6e6fa;"></div>
<div class="a" style="left:725px;top:378px;width:38px;height:24px;border-top:1px solid #703090;border-bottom:1px solid #703090;border-left:1px solid #703090;border-right:1px solid #703090;"></div>
<div class="a" style="left:762px;top:378px;width:38px;height:24px;background:#fff;"></div>
<div class="a" style="left:762px;top:378px;width:38px;height:24px;background:#e6e6fa;"></div>
<div class="a" style="left:762px;top:378px;width:38px;height:24px;border-top:1px solid #703090;border-bottom:1px solid #703090;border-left:1px solid #703090;border-right:1px solid #703090;"></div>
<div class="a" style="left:799px;top:378px;width:38px;height:24px;background:#fff;"></div>
<div class="a" style="left:799px;top:378px;width:10px;height:24px;background:#e6e6fa;"></div>
<div class="a" style="left:799px;top:378px;width:38px;height:24px;border-top:1px solid #703090;border-bottom:1px solid #703090;border-left:1px solid #703090;border-right:1px solid #703090;"></div>
<div class="a" style="left:836px;top:378px;width:38px;height:24px;background:#fff;"></div>
<div class="a" style="left:836px;top:378px;width:38px;height:24px;border-top:1px solid #703090;border-bottom:1px solid #703090;border-left:1px solid #703090;border-right:1px solid #703090;"></div>
<div class="a" style="left:873px;top:378px;width:38px;height:24px;background:#fff;"></div>
<div class="a" style="left:873px;top:378px;width:38px;height:24px;border-top:1px solid #703090;border-bottom:1px solid #703090;border-left:1px solid #703090;border-right:1px solid #703090;"></div>
<div class="a" style="left:910px;top:378px;width:38px;height:24px;background:#fff;"></div>
<div class="a" style="left:910px;top:378px;width:38px;height:24px;border-top:1px solid #703090;border-bottom:1px solid #703090;border-left:1px solid #703090;border-right:1px solid #703090;"></div>
<div class="a" style="left:947px;top:378px;width:38px;height:24px;background:#fff;"></div>
<div class="a" style="left:947px;top:378px;width:38px;height:24px;border-top:1px solid #703090;border-bottom:1px solid #703090;border-left:1px solid #703090;border-right:1px solid #703090;"></div>
<div class="a" style="left:984px;top:378px;width:28px;height:24px;background:#fff;"></div>
<div class="a" style="left:984px;top:378px;width:28px;height:24px;border-top:1px solid #703090;border-bottom:1px solid #703090;border-left:1px solid #703090;border-right:1px solid #703090;"></div>
<div class="a" style="left:435px;top:402px;width:551px;height:49px;background:#fff;"></div>
<div class="a" style="left:631px;top:402px;width:178px;height:49px;background:#e6e6fa;"></div>
<div class="a" style="left:435px;top:402px;width:551px;height:49px;border-top:1px solid #e07018;border-bottom:1px solid #e07018;border-right:1px solid #e07018;"></div>
<div class="a" style="left:435px;top:426px;width:551px;height:1px;background:#e07018;"></div>
<div class="a" style="left:674px;top:451px;width:312px;height:49px;background:#fff;"></div>
<div class="a" style="left:674px;top:451px;width:135px;height:49px;background:#e6e6fa;"></div>
<div class="a" style="left:674px;top:451px;width:312px;height:49px;border-top:1px solid #703090;border-bottom:1px solid #703090;border-left:1px solid #703090;border-right:1px solid #703090;"></div>
<div class="a" style="left:989px;top:451px;width:50px;height:49px;background:#fff;"></div>
<div class="a" style="left:989px;top:451px;width:50px;height:49px;border-top:1px solid #703090;border-bottom:1px solid #703090;border-left:1px solid #703090;border-right:1px solid #703090;"></div>
<div class="lb" style="left:678px;top:456px;color:#c0c0c0">09-leadgtr-00.wav</div>
<div class="a" style="left:675px;top:475px;width:311px;height:1px;background:#703090;"></div>
<svg class="a" style="left:0;top:0" width="1145" height="560" viewBox="0 0 1145 560"><path d="M435 110.5H1004M438.5 104V117M447.5 104V117M457.5 104V117M475.5 104V117M485.5 104V117M494.5 104V117M512.5 104V117M522.5 104V117M531.5 104V117M550.5 104V117M559.5 104V117M568.5 104V117M587.5 104V117M596.5 104V117M605.5 104V117M624.5 104V117M633.5 104V117M642.5 104V117M661.5 104V117M670.5 104V117M679.5 104V117M698.5 104V117M707.5 104V117M717.5 104V117M735.5 104V117M744.5 104V117M754.5 104V117M772.5 104V117M782.5 104V117M791.5 104V117M809.5 104V117M819.5 104V117M828.5 104V117M847.5 104V117M856.5 104V117M865.5 104V117M884.5 104V117M893.5 104V117M902.5 104V117M921.5 104V117M930.5 104V117M939.5 104V117M958.5 104V117M967.5 104V117M976.5 104V117M995.5 104V117" stroke="#401850" stroke-width="1" fill="none" shape-rendering="crispEdges"/><path d="M435.5 156V162M436.5 156V162M437.5 157V161M438.5 156V162M439.5 156V162M440.5 156V162M441.5 156V162M442.5 156V162M443.5 157V161M444.5 156V162M445.5 155V163M446.5 157V161M447.5 156V162M448.5 155V163M449.5 156V162M450.5 156V162M451.5 156V162M452.5 156V162M453.5 156V162M454.5 157V161M455.5 158V160M456.5 158V160M457.5 158V160M458.5 158V160M459.5 158V160M460.5 158V160M461.5 158V160M462.5 158V160M463.5 158V160M464.5 158V160M465.5 158V160M466.5 156V162M467.5 156V161M468.5 156V162M469.5 156V162M470.5 156V162M471.5 156V162M472.5 156V162M473.5 156V162M474.5 157V161M475.5 156V161M476.5 156V162M477.5 156V162M478.5 157V161M479.5 156V161M480.5 156V162M481.5 156V162M482.5 156V161M483.5 156V162M484.5 157V161M485.5 156V162M486.5 156V161M487.5 156V162M488.5 156V162M489.5 155V163M490.5 156V161M491.5 156V162M492.5 156V162M493.5 156V162M494.5 156V161M495.5 156V162M496.5 156V162M497.5 156V162M498.5 156V162M499.5 156V162M500.5 156V162M501.5 156V162M502.5 156V162M503.5 155V162M504.5 156V162M505.5 156V162M506.5 155V163M507.5 157V161M508.5 156V162M509.5 156V162M510.5 158V160M511.5 158V160M512.5 157V161M513.5 156V162M514.5 156V162M515.5 156V161M516.5 156V161M517.5 156V162M518.5 157V161M519.5 156V161M520.5 156V162M521.5 156V162M522.5 157V160M523.5 157V161M524.5 157V161M525.5 157V161M526.5 158V160M527.5 156V162M528.5 157V161M529.5 157V160M530.5 157V161M531.5 157V160M532.5 157V161M533.5 157V161M534.5 158V160M535.5 158V160M536.5 158V160M537.5 158V160M538.5 158V160M539.5 156V162M540.5 155V163M541.5 157V161M542.5 157V161M543.5 157V161M544.5 157V160M545.5 157V161M546.5 156V162M547.5 156V162M548.5 156V161M549.5 158V160M550.5 157V160M551.5 158V160M552.5 158V160M553.5 158V160M554.5 158V160M555.5 156V162M556.5 157V161M557.5 156V162M558.5 156V162M559.5 156V162M560.5 156V162M561.5 155V163M562.5 156V161M563.5 156V162M564.5 156V162M565.5 157V160M566.5 156V161M567.5 155V162M568.5 156V162M569.5 156V162M570.5 156V161M571.5 157V161M572.5 155V163M573.5 156V162M574.5 156V162M575.5 156V162M576.5 157V161M577.5 156V161M578.5 156V162M579.5 156V162M580.5 156V161M581.5 156V162M582.5 155V163M583.5 157V161M584.5 155V162M585.5 157V161M586.5 156V162M587.5 155V163M588.5 156V162M589.5 156V162M590.5 156V161M591.5 155V163M592.5 156V161M593.5 156V162M594.5 156V162M595.5 155V163M596.5 156V161M597.5 157V160M598.5 157V161M599.5 156V162M600.5 156V161M601.5 156V162M602.5 156V162M603.5 157V161M604.5 157V161M605.5 156V161M606.5 157V161M607.5 157V160M608.5 157V161M609.5 157V161M610.5 156V162M611.5 157V161M612.5 157V161M613.5 157V161M614.5 157V161M615.5 158V160M616.5 156V162M617.5 157V161M618.5 157V160M619.5 157V160M620.5 157V160M621.5 156V162M622.5 155V163M623.5 155V162M624.5 155V163M625.5 155V163M626.5 155V163M627.5 155V163M628.5 156V162M629.5 156V162M630.5 156V162M631.5 156V162M632.5 156V162M633.5 156V162M634.5 157V161M635.5 157V161M636.5 157V161M637.5 156V162M638.5 157V161M639.5 156V162M640.5 157V161M641.5 158V160M642.5 158V160M643.5 158V160M644.5 157V161M645.5 157V161M646.5 157V161M647.5 157V161M648.5 157V160M649.5 157V161M650.5 158V160M651.5 157V161M652.5 157V161M653.5 157V161M654.5 157V161M655.5 157V161M656.5 157V161M657.5 157V161M658.5 157V161M659.5 156V162M660.5 157V161M661.5 157V161M662.5 158V160M663.5 157V161M664.5 157V161M665.5 156V162M666.5 156V162M667.5 157V161M668.5 157V161M669.5 158V160M670.5 157V161M671.5 157V161M672.5 157V161M673.5 157V161M674.5 157V161M675.5 156V161M676.5 157V160M677.5 156V162M678.5 157V161M679.5 157V161M680.5 157V161M681.5 156V162M682.5 157V160M683.5 157V161M684.5 157V160M685.5 157V161M686.5 157V160M687.5 157V161M688.5 157V161M689.5 157V161M690.5 157V161M691.5 157V161M692.5 157V161M693.5 158V160M694.5 158V160M695.5 158V160M696.5 158V160M697.5 157V161M698.5 157V160M699.5 157V160M700.5 156V162M701.5 158V160M702.5 156V162M703.5 155V163M704.5 155V163M705.5 156V162M706.5 155V163M707.5 155V163M708.5 155V163M709.5 154V164M710.5 157V161M711.5 157V161M712.5 157V161M713.5 157V160M714.5 157V160M715.5 157V161M716.5 157V161M717.5 157V161M718.5 157V161M719.5 157V160M720.5 157V161M721.5 156V162M722.5 157V160M723.5 157V161M724.5 157V161M725.5 157V160M726.5 157V161M727.5 157V160M728.5 157V161M729.5 157V161M730.5 157V161M731.5 156V162M732.5 156V162M733.5 156V161M734.5 156V161M735.5 156V161M736.5 157V161M737.5 157V161M738.5 157V161M739.5 157V161M740.5 157V160M741.5 156V162M742.5 156V162M743.5 156V162M744.5 157V160M745.5 156V162M746.5 155V163M747.5 157V161M748.5 157V161M749.5 156V162M750.5 156V162M751.5 156V162M752.5 156V161M753.5 156V162M754.5 156V162M755.5 155V163M756.5 155V163M757.5 157V160M758.5 155V163M759.5 156V162M760.5 155V163M761.5 156V162M762.5 156V162M763.5 157V161M764.5 155V163M765.5 156V162M766.5 155V163M767.5 156V162M768.5 157V161M769.5 157V160M770.5 155V162M771.5 156V161M772.5 156V162M773.5 157V161M774.5 156V162M775.5 156V162M776.5 156V162M777.5 156V162M778.5 157V161M779.5 156V162M780.5 158V160M781.5 157V161M782.5 158V160M783.5 157V161M784.5 157V160M785.5 157V161M786.5 158V160M787.5 157V161M788.5 157V161M789.5 157V161M790.5 157V161M791.5 157V161M792.5 156V162M793.5 157V161M794.5 157V161M795.5 157V161M796.5 158V160M797.5 157V161M798.5 158V160M799.5 158V160M800.5 158V160M801.5 156V162M802.5 157V161M803.5 157V161M804.5 157V161M805.5 157V161M806.5 157V161M807.5 157V161M808.5 157V160M809.5 157V160M810.5 157V161M811.5 157V161M812.5 157V161M813.5 158V160M814.5 158V160M815.5 158V160M816.5 158V160M817.5 157V161M818.5 158V160M819.5 157V161M820.5 156V162M821.5 157V161M822.5 158V160M823.5 157V161M824.5 158V160M825.5 157V161M826.5 157V160M827.5 156V162M828.5 156V162M829.5 156V162M830.5 156V162M831.5 156V162M832.5 155V163M833.5 158V160M834.5 158V160M835.5 158V160M836.5 158V160M837.5 158V160M838.5 158V160M839.5 157V161M840.5 158V160M841.5 158V160M842.5 157V161M843.5 157V160M844.5 157V160M845.5 157V160M846.5 157V161M847.5 157V161M848.5 157V161M849.5 158V160M850.5 157V161M851.5 157V160M852.5 158V160M853.5 158V160M854.5 156V161M855.5 156V162M856.5 156V162M857.5 155V163M858.5 156V161M859.5 156V162M860.5 155V162M861.5 156V162M862.5 156V161M863.5 157V161M864.5 157V161M865.5 157V161M866.5 158V160M867.5 157V160M868.5 157V161M869.5 157V160M870.5 155V162M871.5 155V163M872.5 154V164M873.5 155V163M874.5 155V163M875.5 155V163M876.5 155V163M877.5 156V161M878.5 155V163M879.5 156V162M880.5 156V162M881.5 155V163M882.5 156V162M883.5 157V161M884.5 158V160M885.5 157V161M886.5 158V160M887.5 156V161M888.5 157V161M889.5 157V161M890.5 156V162M891.5 157V161M892.5 157V160M893.5 156V161M894.5 156V162M895.5 156V162M896.5 155V163M897.5 157V161M898.5 157V161M899.5 156V162M900.5 157V161M901.5 157V161M902.5 157V161M903.5 157V160M904.5 157V161M905.5 157V160M906.5 157V161M907.5 157V161M908.5 158V160M909.5 157V161M910.5 158V160M911.5 157V161M912.5 157V161M913.5 157V161M914.5 157V161M915.5 155V163M916.5 154V164M917.5 155V163M918.5 154V164M919.5 155V163M920.5 155V163M921.5 155V163M922.5 154V164M923.5 155V163M924.5 155V163M925.5 154V164M926.5 155V162M927.5 158V160M928.5 158V160M929.5 158V160M930.5 158V160M931.5 158V160M932.5 158V160M933.5 158V160M934.5 158V160M935.5 155V163M936.5 156V161M937.5 156V162M938.5 156V161M939.5 155V163M940.5 155V163M941.5 156V161M942.5 156V162M943.5 156V162M944.5 156V162M945.5 156V162M946.5 156V162M947.5 156V162M948.5 156V161M949.5 156V162M950.5 156V162M951.5 156V162M952.5 157V161M953.5 155V163M954.5 157V161M955.5 156V162M956.5 155V163M957.5 156V162M958.5 155V163M959.5 156V162M960.5 156V162M961.5 155V163M962.5 156V162M963.5 156V162M964.5 156V162M965.5 157V160M966.5 156V162M967.5 155V163M968.5 156V162M969.5 157V160M970.5 156V162M971.5 155V163M972.5 157V161M973.5 156V162M974.5 156V162M975.5 156V162M976.5 156V162M977.5 156V162M978.5 157V161M979.5 157V161M980.5 157V161M981.5 157V161M982.5 157V161M983.5 158V160M984.5 158V160M985.5 158V160M986.5 158V160M987.5 158V160M988.5 158V160M989.5 156V162M990.5 156V162M991.5 156V161M992.5 157V161M993.5 156V162M994.5 156V162M995.5 156V162M996.5 157V160M997.5 158V160M998.5 157V161M999.5 157V161M1000.5 156V161" stroke="#e07018" stroke-width="1" fill="none" shape-rendering="crispEdges"/><path d="M435.5 216V223M436.5 216V224M437.5 215V225M438.5 216V224M439.5 217V222M440.5 215V224M441.5 216V224M442.5 217V223M443.5 217V223M444.5 216V223M445.5 218V222M446.5 218V222M447.5 218V222M448.5 216V224M449.5 218V222M450.5 216V224M451.5 216V223M452.5 217V223M453.5 216V224M454.5 217V223M455.5 215V224M456.5 216V223M457.5 216V224M458.5 217V222M459.5 217V223M460.5 216V223M461.5 217V222M462.5 216V223M463.5 216V224M464.5 217V223M465.5 218V222M466.5 216V223M467.5 216V224M468.5 217V222M469.5 217V223M470.5 219V221M471.5 219V221M472.5 219V221M473.5 219V221M474.5 218V222M475.5 218V222M476.5 217V223M477.5 217V223M478.5 217V223M479.5 217V223M480.5 218V222M481.5 218V222M482.5 219V221M483.5 219V221M484.5 219V221M485.5 219V221M486.5 218V222M487.5 218V222M488.5 217V223M489.5 217V223M490.5 218V222M491.5 216V223M492.5 217V222M493.5 215V224M494.5 215V225M495.5 216V223M496.5 215V225M497.5 216V224M498.5 217V222M499.5 215V224M500.5 217V223M501.5 217V222M502.5 217V223M503.5 217V222M504.5 216V224M505.5 217V223M506.5 216V223M507.5 218V222M508.5 216V223M509.5 216V224M510.5 217V223M511.5 215V224M512.5 215V225M513.5 215V225M514.5 216V223M515.5 217V222M516.5 216V224M517.5 215V224M518.5 217V223M519.5 216V223M520.5 216V223M521.5 217V222M522.5 217V223M523.5 218V222M524.5 217V222M525.5 216V224M526.5 218V222M527.5 216V223M528.5 217V222M529.5 216V224M530.5 215V224M531.5 216V223M532.5 215V224M533.5 215V224M534.5 215V224M535.5 216V224M536.5 217V222M537.5 217V222M538.5 217V222M539.5 217V222M540.5 217V222M541.5 217V223M542.5 216V223M543.5 216V223M544.5 219V221M545.5 219V221M546.5 219V221M547.5 219V221M548.5 218V222M549.5 218V222M550.5 217V223M551.5 217V223M552.5 217V223M553.5 217V223M554.5 218V222M555.5 218V222M556.5 219V221M557.5 219V221M558.5 219V221M559.5 219V221M560.5 218V222M561.5 218V222M562.5 217V223M563.5 218V222M564.5 216V223M565.5 217V223M566.5 216V223M567.5 217V222M568.5 217V222M569.5 215V225M570.5 217V222M571.5 216V224M572.5 217V223M573.5 216V224M574.5 215V225M575.5 217V223M576.5 218V222M577.5 217V223M578.5 217V222M579.5 217V223M580.5 217V223M581.5 216V223M582.5 218V222M583.5 216V223M584.5 216V223M585.5 215V224M586.5 217V222M587.5 215V224M588.5 215V225M589.5 216V223M590.5 216V224M591.5 216V223M592.5 215V225M593.5 216V223M594.5 216V224M595.5 217V222M596.5 217V223M597.5 218V222M598.5 217V223M599.5 217V222M600.5 216V223M601.5 217V223M602.5 216V223M603.5 216V223M604.5 216V223M605.5 217V222M606.5 216V223M607.5 217V223M608.5 217V222M609.5 217V223M610.5 216V223M611.5 218V222M612.5 218V222M613.5 216V224M614.5 217V223M615.5 216V223M616.5 217V222M617.5 217V223M618.5 219V221M619.5 219V221M620.5 219V221M621.5 219V221M622.5 218V222M623.5 218V222M624.5 217V223M625.5 217V223M626.5 217V223M627.5 217V223M628.5 218V222M629.5 218V222M630.5 219V221M631.5 219V221M632.5 219V221M633.5 219V221M634.5 218V222M635.5 218V222M636.5 218V222M637.5 218V222M638.5 217V223M639.5 217V222M640.5 216V224M641.5 217V222M642.5 216V224M643.5 215V225M644.5 217V222M645.5 216V223M646.5 215V224M647.5 216V224M648.5 215V224M649.5 216V224M650.5 217V223M651.5 216V223M652.5 217V222M653.5 216V224M654.5 218V222M655.5 216V224M656.5 217V223M657.5 218V222M658.5 217V223M659.5 216V224M660.5 216V223M661.5 215V224M662.5 215V225M663.5 217V223M664.5 217V223M665.5 216V224M666.5 215V224M667.5 217V223M668.5 217V223M669.5 218V222M670.5 218V222M671.5 217V223M672.5 218V222M673.5 216V224M674.5 218V222M675.5 217V222M676.5 216V223M677.5 215V225M678.5 216V224M679.5 216V223M680.5 215V225M681.5 217V223M682.5 217V222M683.5 216V224M684.5 216V223M685.5 217V222M686.5 218V222M687.5 217V223M688.5 217V223M689.5 218V222M690.5 217V222M691.5 218V222M692.5 219V221M693.5 219V221M694.5 219V221M695.5 219V221M696.5 218V222M697.5 218V222M698.5 217V223M699.5 217V223M700.5 217V223M701.5 217V223M702.5 218V222M703.5 218V222M704.5 219V221M705.5 219V221M706.5 219V221M707.5 219V221M708.5 218V222M709.5 218V222M710.5 217V222M711.5 218V222M712.5 217V222M713.5 218V222M714.5 216V223M715.5 216V224M716.5 216V224M717.5 215V224M718.5 215V225M719.5 215V224M720.5 216V224M721.5 217V222M722.5 216V223M723.5 217V222M724.5 216V223M725.5 216V223M726.5 217V223M727.5 217V222M728.5 218V222M729.5 218V222M730.5 218V222M731.5 216V223M732.5 216V223M733.5 217V222M734.5 217V222M735.5 216V223M736.5 217V223M737.5 216V224M738.5 216V223M739.5 215V224M740.5 217V222M741.5 217V223M742.5 216V224M743.5 218V222M744.5 217V222M745.5 218V222M746.5 217V222M747.5 217V223M748.5 218V222M749.5 217V223M750.5 216V224M751.5 217V223M752.5 216V224M753.5 216V223M754.5 215V225M755.5 216V223M756.5 217V222M757.5 217V223M758.5 217V223M759.5 216V223M760.5 216V223M761.5 218V222M762.5 217V222M763.5 218V222M764.5 217V222M765.5 216V224M766.5 218V222M767.5 219V221M768.5 219V221M769.5 219V221M770.5 219V221M771.5 218V222M772.5 218V222M773.5 217V223M774.5 217V223M775.5 217V223M776.5 217V223M777.5 218V222M778.5 218V222M779.5 219V221M780.5 219V221M781.5 219V221M782.5 219V221M783.5 218V222M784.5 218V222M785.5 218V222M786.5 218V222M787.5 216V223M788.5 217V223M789.5 218V222M790.5 216V224M791.5 215V225M792.5 217V222M793.5 217V223M794.5 217V222M795.5 215V225M796.5 216V224M797.5 216V224M798.5 216V223M799.5 217V222M800.5 217V222M801.5 217V223M802.5 217V222M803.5 217V223M804.5 217V223M805.5 217V223M806.5 216V223M807.5 216V223M808.5 217V223M809.5 216V224M810.5 215V225M811.5 216V223M812.5 215V225M813.5 216V223M814.5 215V225M815.5 218V222M816.5 217V223M817.5 216V224M818.5 217V222M819.5 218V222M820.5 217V222M821.5 218V222M822.5 217V222M823.5 218V222M824.5 217V222M825.5 216V223M826.5 217V223M827.5 217V223M828.5 215V224M829.5 216V223M830.5 215V225M831.5 217V222M832.5 217V223M833.5 217V223M834.5 218V222M835.5 216V224M836.5 218V222M837.5 217V223M838.5 217V222M839.5 216V224M840.5 217V222M841.5 219V221M842.5 219V221M843.5 219V221M844.5 219V221M845.5 218V222M846.5 218V222M847.5 217V223M848.5 217V223M849.5 217V223M850.5 217V223M851.5 218V222M852.5 218V222M853.5 219V221M854.5 219V221M855.5 219V221M856.5 219V221M857.5 218V222M858.5 218V222M859.5 216V223M860.5 217V223M861.5 217V223M862.5 217V222M863.5 216V224M864.5 217V222M865.5 216V224M866.5 215V225M867.5 215V225M868.5 216V223M869.5 216V224M870.5 217V223M871.5 217V222M872.5 216V224M873.5 217V223M874.5 216V224M875.5 217V222M876.5 217V223M877.5 216V223M878.5 217V223M879.5 218V222M880.5 216V223M881.5 215V225M882.5 215V224M883.5 216V223M884.5 215V225M885.5 215V224M886.5 215V225M887.5 216V224M888.5 215V225M889.5 217V223M890.5 216V223M891.5 217V222M892.5 217V223M893.5 217V222M894.5 217V223M895.5 217V223M896.5 217V223M897.5 218V222M898.5 216V223M899.5 217V223M900.5 217V223M901.5 217V223M902.5 216V223M903.5 215V225M904.5 216V224M905.5 215V225M906.5 217V222M907.5 217V223M908.5 216V223M909.5 218V222M910.5 216V223M911.5 217V223M912.5 216V223M913.5 218V222M914.5 218V222M915.5 219V221M916.5 219V221M917.5 219V221M918.5 219V221M919.5 218V222M920.5 218V222M921.5 217V223M922.5 217V223M923.5 217V223M924.5 217V223M925.5 218V222M926.5 218V222M927.5 219V221M928.5 219V221M929.5 219V221M930.5 219V221M931.5 218V222M932.5 218V222M933.5 216V224M934.5 216V224M935.5 218V222M936.5 216V224M937.5 216V223M938.5 217V222M939.5 216V224M940.5 216V223M941.5 217V222M942.5 217V223M943.5 217V222M944.5 216V224M945.5 216V223M946.5 216V223M947.5 216V224M948.5 216V224M949.5 216V224M950.5 218V222M951.5 217V223M952.5 216V223M953.5 216V224M954.5 217V223M955.5 217V222M956.5 217V223M957.5 216V223M958.5 215V225M959.5 215V225M960.5 216V224M961.5 217V222M962.5 216V223M963.5 215V225M964.5 217V222M965.5 217V223M966.5 216V223M967.5 218V222M968.5 217V222M969.5 216V224M970.5 217V222M971.5 218V222M972.5 215V225M973.5 215V224M974.5 217V222M975.5 216V224M976.5 216V223M977.5 216V224M978.5 216V224M979.5 217V223M980.5 217V223M981.5 217V223M982.5 217V222M983.5 216V223M984.5 216V224" stroke="#703090" stroke-width="1" fill="none" shape-rendering="crispEdges"/><path d="M467.5 185V191M467.5 248V255M541.5 185V191M541.5 248V255M615.5 185V191M615.5 248V255M689.5 185V191M689.5 248V255M764.5 185V191M764.5 248V255M838.5 185V191M838.5 248V255M912.5 185V191M912.5 248V255" stroke="#808080" stroke-width="1" fill="none" shape-rendering="crispEdges"/><path d="M1001.5 136V183" stroke="#808080" stroke-width="1" fill="none" shape-rendering="crispEdges"/><path d="M1002 136 C1008 146 1012.500 162 1013 183" stroke="#0000ff" stroke-width="1.1" fill="none"/><path d="M435 280.5H463M463 280.5H502M502 280.5H535M536 280.5H595M607 280.5H641M647 280.5H696M696 280.5H738M740 280.5H778M778 280.5H815M815 280.5H873M874 280.5H890M890 280.5H919M922 280.5H1001" stroke="#e07018" stroke-width="1" fill="none" shape-rendering="crispEdges"/><path d="M436.5 275V284M437.5 272V287M438.5 267V292M439.5 267V294M440.5 260V300M441.5 264V297M442.5 264V295M443.5 262V297M444.5 263V296M445.5 262V299M446.5 266V293M447.5 271V290M448.5 270V291M449.5 271V288M450.5 271V290M451.5 267V293M452.5 271V288M453.5 274V286M455.5 276V283M456.5 274V287M457.5 272V289M458.5 275V285M459.5 277V282M464.5 279V281M465.5 278V282M466.5 277V284M467.5 276V283M468.5 276V285M469.5 276V284M470.5 275V284M471.5 275V284M472.5 275V284M473.5 274V285M474.5 276V285M475.5 276V283M476.5 274V287M477.5 276V285M478.5 276V285M479.5 277V283M480.5 276V285M481.5 277V282M482.5 274V286M483.5 273V287M484.5 273V287M485.5 274V287M486.5 275V286M487.5 277V282M491.5 278V282M492.5 278V283M493.5 277V283M494.5 278V281M495.5 279V281M505.5 279V281M506.5 277V284M507.5 277V282M508.5 276V284M509.5 275V285M510.5 275V285M511.5 275V286M512.5 275V284M513.5 277V283M514.5 277V283M515.5 276V283M516.5 274V286M517.5 274V286M518.5 273V287M519.5 276V284M524.5 278V283M525.5 278V281M526.5 278V281M527.5 278V281M528.5 279V281M537.5 279V281M538.5 278V281M539.5 277V282M540.5 276V285M541.5 276V283M542.5 275V285M543.5 275V284M544.5 275V285M545.5 275V286M546.5 275V286M547.5 277V283M548.5 277V282M549.5 278V282M554.5 278V283M555.5 277V282M556.5 276V285M557.5 277V284M558.5 278V281M561.5 279V282M562.5 279V282M563.5 279V281M564.5 279V282M565.5 279V281M612.5 278V281M613.5 276V283M614.5 276V284M615.5 274V287M616.5 273V286M617.5 274V287M618.5 273V287M619.5 274V287M620.5 272V287M621.5 272V289M622.5 273V287M623.5 273V288M624.5 276V285M625.5 274V285M626.5 273V286M627.5 275V286M628.5 277V282M650.5 276V283M651.5 274V286M652.5 273V288M653.5 273V288M654.5 273V286M655.5 273V288M656.5 272V287M657.5 273V287M658.5 277V283M663.5 277V284M664.5 276V284M665.5 274V286M666.5 272V289M667.5 273V286M668.5 273V286M669.5 274V285M670.5 274V285M671.5 277V283M675.5 278V283M676.5 275V284M677.5 274V285M678.5 274V287M679.5 272V289M680.5 271V289M681.5 274V285M682.5 273V288M683.5 273V287M684.5 276V285M685.5 278V282M686.5 278V283M687.5 277V283M688.5 275V285M689.5 277V283M690.5 277V282M701.5 278V281M702.5 274V286M703.5 270V290M704.5 268V291M705.5 267V293M706.5 270V290M707.5 267V292M708.5 269V290M709.5 271V289M710.5 275V285M711.5 277V282M715.5 275V284M716.5 274V287M717.5 271V290M718.5 270V289M719.5 271V288M720.5 274V286M721.5 276V284M724.5 275V284M725.5 272V287M726.5 271V290M727.5 271V289M728.5 272V289M729.5 274V285M730.5 276V283M742.5 279V281M743.5 276V284M744.5 272V287M745.5 271V288M746.5 271V289M747.5 270V290M748.5 271V289M749.5 267V293M750.5 269V290M751.5 270V290M752.5 268V291M753.5 271V288M754.5 273V286M755.5 276V283M756.5 279V281M760.5 277V282M761.5 273V287M762.5 274V286M763.5 270V291M764.5 273V288M765.5 272V289M766.5 274V285M767.5 275V286M768.5 277V284M769.5 278V282M770.5 277V283M771.5 276V285M772.5 278V281M773.5 278V283M783.5 275V285M784.5 271V289M785.5 268V292M786.5 267V292M787.5 268V293M788.5 270V291M789.5 273V287M790.5 269V291M791.5 264V295M792.5 262V299M793.5 258V302M794.5 259V302M795.5 262V297M796.5 272V289M797.5 274V285M798.5 269V292M799.5 265V296M800.5 268V293M801.5 266V295M802.5 271V290M803.5 273V287M816.5 276V284M817.5 272V288M818.5 271V290M819.5 268V293M820.5 268V293M821.5 271V288M822.5 272V289M823.5 272V288M824.5 276V283M825.5 276V284M826.5 274V286M827.5 273V287M828.5 270V289M829.5 274V286M830.5 273V286M831.5 275V286M832.5 275V286M833.5 273V288M834.5 273V286M835.5 274V285M836.5 276V284M837.5 279V281M838.5 276V284M839.5 275V284M840.5 277V284M841.5 278V282M843.5 279V281M844.5 279V282M845.5 279V281M846.5 278V281M847.5 278V282M848.5 279V282M849.5 278V283M850.5 279V282M851.5 279V281M876.5 279V281M877.5 278V281M878.5 277V282M879.5 278V281M880.5 278V282M892.5 277V284M893.5 275V286M894.5 276V285M895.5 276V284M896.5 277V283M898.5 278V283M899.5 278V281M900.5 277V282M901.5 278V282M902.5 279V282M905.5 279V281M906.5 279V281M907.5 279V282M928.5 278V282M929.5 277V283M930.5 276V283M931.5 277V284M932.5 276V285M933.5 276V285M934.5 276V285M935.5 278V282M936.5 278V282M938.5 279V282M939.5 278V282M940.5 277V284M941.5 277V284M942.5 277V283M943.5 277V283M944.5 277V283M945.5 278V283M946.5 279V281M947.5 279V282M948.5 278V281M949.5 278V283M950.5 277V283M951.5 278V282M952.5 278V282M953.5 279V282M957.5 279V281M958.5 279V281M959.5 279V282" stroke="#e07018" stroke-width="1" fill="none" shape-rendering="crispEdges"/><path d="M438 393.5h1M440 393.5h1M445 394.5h1M447 394.5h1M449 394.5h1M454 392.5h1M456 392.5h1M461 393.5h1M463 393.5h1M466 394.5h1M468 392.5h1M477 393.5h1M480 392.5h1M489 393.5h1M493 393.5h1M498 392.5h1M503 393.5h1M505 393.5h1M510 394.5h1M512 393.5h1M514 393.5h1M517 393.5h1M519 394.5h1M521 393.5h1M524 392.5h1M526 393.5h1M528 393.5h1M531 394.5h1M533 393.5h1M535 394.5h1M538 393.5h1M540 394.5h1M545 392.5h1M549 394.5h1M552 393.5h1M556 394.5h1M561 393.5h1M563 394.5h1M565 393.5h1M568 394.5h1M570 392.5h1M575 392.5h1M577 393.5h1M579 393.5h1M584 393.5h1M586 393.5h1M589 394.5h1M593 393.5h1M596 393.5h1M598 393.5h1M600 392.5h1M603 394.5h1M605 393.5h1M607 393.5h1M610 393.5h1M612 393.5h1M616 393.5h1M619 392.5h1M621 392.5h1M623 393.5h1M628 393.5h1M630 393.5h1M633 393.5h1M635 393.5h1M637 393.5h1M640 393.5h1M642 392.5h1M644 393.5h1M647 393.5h1M654 393.5h1M658 393.5h1M661 393.5h1M663 393.5h1M668 392.5h1M670 394.5h1M672 393.5h1M675 392.5h1M677 393.5h1M679 393.5h1M681 394.5h1M686 394.5h1M688 393.5h1M693 393.5h1M695 393.5h1M698 393.5h1M700 392.5h1M702 392.5h1M707 394.5h1M709 393.5h1M714 394.5h1M716 393.5h1M719 394.5h1M721 393.5h1M723 392.5h1M726 393.5h1M728 394.5h1M733 393.5h1M735 392.5h1M737 392.5h1M739 393.5h1M742 393.5h1M744 392.5h1M746 392.5h1M753 393.5h1M756 392.5h1M760 393.5h1M763 393.5h1M765 393.5h1M767 393.5h1M770 394.5h1M772 393.5h1M774 393.5h1M779 393.5h1M781 394.5h1M784 393.5h1M786 392.5h1M788 393.5h1M791 393.5h1M793 393.5h1M795 393.5h1M797 393.5h1M818 393.5h1M821 392.5h1M823 392.5h1M825 392.5h1M828 393.5h1M830 392.5h1M832 394.5h1M835 392.5h1M837 392.5h1M839 393.5h1M842 394.5h1M844 393.5h1M846 393.5h1M851 392.5h1M856 392.5h1M858 394.5h1M862 394.5h1M865 393.5h1M869 394.5h1M872 392.5h1M874 393.5h1M879 393.5h1M881 393.5h1M883 393.5h1M886 393.5h1M888 392.5h1M890 392.5h1M893 394.5h1M895 393.5h1M897 393.5h1M900 393.5h1M902 392.5h1M904 394.5h1M909 393.5h1M911 393.5h1M914 394.5h1M918 393.5h1M920 393.5h1M923 392.5h1M925 393.5h1M927 393.5h1M930 393.5h1M932 393.5h1M934 393.5h1M937 393.5h1M939 393.5h1M941 393.5h1M944 394.5h1M946 392.5h1M948 393.5h1M953 393.5h1M962 392.5h1M965 393.5h1M969 392.5h1M972 393.5h1M974 393.5h1M979 393.5h1M981 393.5h1M988 394.5h1M990 394.5h1M992 393.5h1M997 393.5h1M999 394.5h1M1002 393.5h1M1004 393.5h1M1006 393.5h1M1009 392.5h1" stroke="#703090" stroke-width="1" fill="none" shape-rendering="crispEdges"/><path d="M652.5 425V427M653.5 425V427M690.5 425V427M691.5 425V427M692.5 425V427M693.5 425V427M694.5 425V427M695.5 425V427M696.5 425V427M697.5 425V427M700.5 425V427M701.5 425V427M702.5 425V427M703.5 425V427M710.5 425V427M711.5 425V427M726.5 424V428M727.5 424V428M728.5 424V428M734.5 425V427M735.5 425V427M736.5 425V427M737.5 425V427M738.5 425V427M739.5 425V427M745.5 425V427M746.5 425V427M747.5 425V427M748.5 425V427M749.5 425V427M750.5 425V427M751.5 425V427M752.5 425V427M753.5 425V427M754.5 425V427M760.5 425V427M761.5 425V427M762.5 425V427M763.5 425V427M776.5 425V427M777.5 425V427M778.5 425V427M779.5 425V427M790.5 424V428M791.5 424V428M792.5 424V428M797.5 425V427M798.5 425V427M799.5 425V427M800.5 425V427M801.5 425V427M802.5 425V427M803.5 425V427M804.5 425V427M808.5 425V427M809.5 425V427M820.5 424V428M821.5 424V428M822.5 424V428M830.5 425V427M831.5 425V427M832.5 425V427M833.5 425V427M836.5 424V428M837.5 424V428M844.5 425V427M845.5 425V427M846.5 425V427M847.5 425V427M848.5 425V427M849.5 425V427M858.5 425V427M859.5 425V427M860.5 425V427M861.5 425V427M862.5 425V427M863.5 425V427M864.5 425V427M865.5 425V427M872.5 425V427M873.5 425V427M874.5 425V427M875.5 425V427M884.5 425V427M885.5 425V427" stroke="#e07018" stroke-width="1" fill="none" shape-rendering="crispEdges"/><path d="M867.5 403V450" stroke="#808080" stroke-width="1" fill="none" shape-rendering="crispEdges"/><path d="M690.5 474V476M691.5 474V476M692.5 474V476M693.5 474V476M694.5 474V476M695.5 474V476M696.5 474V476M697.5 474V476M700.5 474V476M701.5 474V476M702.5 474V476M703.5 474V476M710.5 474V476M711.5 474V476M726.5 473V476M727.5 473V476M728.5 473V476M734.5 474V476M735.5 474V476M736.5 474V476M737.5 474V476M738.5 474V476M739.5 474V476M745.5 474V476M746.5 474V476M747.5 474V476M748.5 474V476M749.5 474V476M750.5 474V476M751.5 474V476M752.5 474V476M753.5 474V476M754.5 474V476M760.5 474V476M761.5 474V476M762.5 474V476M763.5 474V476M776.5 474V476M777.5 474V476M778.5 474V476M779.5 474V476M790.5 473V476M791.5 473V476M792.5 473V476M797.5 474V476M798.5 474V476M799.5 474V476M800.5 474V476M801.5 474V476M802.5 474V476M803.5 474V476M804.5 474V476M808.5 474V476M809.5 474V476M820.5 473V476M821.5 473V476M822.5 473V476M830.5 474V476M831.5 474V476M832.5 474V476M833.5 474V476M836.5 473V476M837.5 473V476M844.5 474V476M845.5 474V476M846.5 474V476M847.5 474V476M848.5 474V476M849.5 474V476M858.5 474V476M859.5 474V476M860.5 474V476M861.5 474V476M862.5 474V476M863.5 474V476M864.5 474V476M865.5 474V476M872.5 474V476M873.5 474V476M874.5 474V476M875.5 474V476M884.5 474V476M885.5 474V476" stroke="#703090" stroke-width="1" fill="none" shape-rendering="crispEdges"/><path d="M867.5 452V499" stroke="#808080" stroke-width="1" fill="none" shape-rendering="crispEdges"/><path d="M868 402.5 C932.625 411.05 979.625 428.625 985.5 450" stroke="#0000f0" stroke-width="1.05" fill="none"/><path d="M868 451.5 C932.625 460.23 979.625 478.175 985.5 500" stroke="#0000f0" stroke-width="1.05" fill="none"/><path d="M435 476.5H870L998.5 483.5L1033.5 499L1054 499.5" stroke="#408040" stroke-width="1" fill="none"/><path d="M435 499.5H707L728 499L770 498L836 496.800L1011 494.500H1054" stroke="#20d080" stroke-width="1.2" fill="none"/><rect x="868" y="474.5" width="4" height="4" fill="none" stroke="#408040" stroke-width="1"/><rect x="996.5" y="481.5" width="4" height="4" fill="none" stroke="#408040" stroke-width="1"/><rect x="1031.5" y="496" width="4" height="4" fill="none" stroke="#408040" stroke-width="1"/><rect x="705" y="496" width="4" height="4" fill="none" stroke="#20d080" stroke-width="1"/><rect x="834" y="494.8" width="4" height="4" fill="none" stroke="#20d080" stroke-width="1"/><rect x="1009" y="492.5" width="4" height="4" fill="none" stroke="#20d080" stroke-width="1"/></svg>
<div class="yl" style="left:466px;top:87px;height:455px"></div>
<div class="yl" style="left:503px;top:87px;height:455px"></div>
<div class="yl" style="left:540px;top:87px;height:455px"></div>
<div class="yl" style="left:577px;top:87px;height:455px"></div>
<div class="yl" style="left:614px;top:87px;height:455px"></div>
<div class="yl" style="left:651px;top:87px;height:455px"></div>
<div class="yl" style="left:688px;top:87px;height:455px"></div>
<div class="yl" style="left:726px;top:87px;height:455px"></div>
<div class="yl" style="left:763px;top:87px;height:455px"></div>
<div class="yl" style="left:800px;top:87px;height:455px"></div>
<div class="yl" style="left:837px;top:87px;height:455px"></div>
<div class="yl" style="left:874px;top:87px;height:455px"></div>
<div class="yl" style="left:911px;top:87px;height:455px"></div>
<div class="yl" style="left:948px;top:87px;height:455px"></div>
<div class="yl" style="left:985px;top:87px;height:455px"></div>
<div class="yl" style="left:1023px;top:87px;height:455px"></div>
<div class="a" style="left:467px;top:87px;width:1px;height:47px;background:#401850;"></div>
<div class="a" style="left:504px;top:87px;width:1px;height:47px;background:#401850;"></div>
<div class="a" style="left:541px;top:87px;width:1px;height:47px;background:#401850;"></div>
<div class="a" style="left:578px;top:87px;width:1px;height:47px;background:#401850;"></div>
<div class="a" style="left:615px;top:87px;width:1px;height:47px;background:#401850;"></div>
<div class="a" style="left:652px;top:87px;width:1px;height:47px;background:#401850;"></div>
<div class="a" style="left:689px;top:87px;width:1px;height:47px;background:#401850;"></div>
<div class="a" style="left:727px;top:87px;width:1px;height:47px;background:#401850;"></div>
<div class="a" style="left:764px;top:87px;width:1px;height:47px;background:#401850;"></div>
<div class="a" style="left:801px;top:87px;width:1px;height:47px;background:#401850;"></div>
<div class="a" style="left:838px;top:87px;width:1px;height:47px;background:#401850;"></div>
<div class="a" style="left:875px;top:87px;width:1px;height:47px;background:#401850;"></div>
<div class="a" style="left:912px;top:87px;width:1px;height:47px;background:#401850;"></div>
<div class="a" style="left:949px;top:87px;width:1px;height:47px;background:#401850;"></div>
<div class="a" style="left:986px;top:87px;width:1px;height:47px;background:#401850;"></div>
<div class="a" style="left:466px;top:87px;width:2px;height:47px;background:#401850;"></div>
<div class="a" style="left:763px;top:87px;width:2px;height:47px;background:#401850;"></div>
<div class="a" style="left:726px;top:87px;width:1px;height:47px;background:#401850;"></div>
<div class="a" style="left:594px;top:68px;width:1px;height:474px;background:#8000ff;"></div>
<div class="a" style="left:705px;top:63px;width:1px;height:479px;background:#ea6068;"></div>
<div class="a" style="left:949px;top:86px;width:1px;height:456px;background:repeating-linear-gradient(180deg,#000 0,#000 1px,#fff 1px,#fff 2px)"></div>
<div class="a" style="left:950px;top:86px;width:1px;height:456px;background:repeating-linear-gradient(180deg,#fff 0,#fff 1px,#000 1px,#000 2px);opacity:.55"></div>
<div class="a chk" style="left:1054px;top:86px;width:16px;height:456px"></div>
<div class="btn" style="left:1054px;top:86px;width:16px;height:16px"></div>
<svg class="a" style="left:1058px;top:91px" width="9" height="6" viewBox="0 0 9 6"><path d="M1 5 L4.5 1 L8 5 Z" fill="#000"/></svg>
<div class="btn" style="left:1054px;top:102px;width:16px;height:368px"></div>
<div class="btn" style="left:1054px;top:526px;width:16px;height:16px"></div>
<svg class="a" style="left:1058px;top:532px" width="9" height="6" viewBox="0 0 9 6"><path d="M1 1 L4.5 5 L8 1 Z" fill="#000"/></svg>
<div class="a chk" style="left:435px;top:542px;width:619px;height:16px"></div>
<div class="btn" style="left:435px;top:542px;width:16px;height:16px"></div>
<svg class="a" style="left:440px;top:546px" width="6" height="9" viewBox="0 0 6 9"><path d="M5 0.5 L1 4.5 L5 8.5 Z" fill="#000"/></svg>
<div class="btn" style="left:914px;top:542px;width:124px;height:16px"></div>
<div class="btn" style="left:1038px;top:542px;width:16px;height:16px"></div>
<svg class="a" style="left:1044px;top:546px" width="6" height="9" viewBox="0 0 6 9"><path d="M1 0.5 L5 4.5 L1 8.5 Z" fill="#000"/></svg>
<div class="a" style="left:1054px;top:542px;width:16px;height:16px;background:#d4d0c8;"></div>
<div class="fld" style="left:1074px;top:45px;width:66px;height:19px;padding-top:2px;padding-left:2px">Measures</div>
<div class="btn" style="left:1122px;top:47px;width:16px;height:15px"></div>
<svg class="a" style="left:1126px;top:52px" width="9" height="6" viewBox="0 0 9 6"><path d="M1 1 L4.5 5 L8 1 Z" fill="#000"/></svg>
<div class="t" style="left:1073px;top:71px;">Project BPM:</div>
<div class="fld" style="left:1074px;top:86px;width:63px;height:22px;padding-top:3px;padding-left:2px">72.500</div>
<div class="t" style="left:1073px;top:113px;">Selection:</div>
<div class="fld" style="left:1074px;top:128px;width:63px;height:22px;padding-top:3px;padding-left:2px">69.02.84</div>
<div class="fld" style="left:1074px;top:154px;width:63px;height:22px;padding-top:3px;padding-left:2px">74.01.99</div>
<div class="fld" style="left:1074px;top:180px;width:63px;height:22px;padding-top:3px;padding-left:2px">04.03.15</div>
<div class="fld" style="left:1094px;top:207px;width:13px;height:13px;padding:0"></div>
<div class="t" style="left:1113px;top:208px;">Lock</div>
<div class="a" style="left:1092px;top:412px;width:3px;height:137px;border:1px solid;border-color:#808080 #fff #fff #808080;background:#404040"></div>
<div class="a" style="left:1078px;top:417px;width:4px;height:1px;background:#000;"></div>
<div class="a" style="left:1078px;top:430px;width:4px;height:1px;background:#000;"></div>
<div class="a" style="left:1078px;top:442px;width:4px;height:1px;background:#000;"></div>
<div class="a" style="left:1078px;top:455px;width:4px;height:1px;background:#000;"></div>
<div class="a" style="left:1078px;top:468px;width:4px;height:1px;background:#000;"></div>
<div class="a" style="left:1078px;top:481px;width:4px;height:1px;background:#000;"></div>
<div class="a" style="left:1078px;top:493px;width:4px;height:1px;background:#000;"></div>
<div class="a" style="left:1078px;top:506px;width:4px;height:1px;background:#000;"></div>
<div class="a" style="left:1078px;top:519px;width:4px;height:1px;background:#000;"></div>
<div class="a" style="left:1078px;top:531px;width:4px;height:1px;background:#000;"></div>
<div class="a" style="left:1078px;top:544px;width:4px;height:1px;background:#000;"></div>
<svg class="a" style="left:1082px;top:532px" width="23" height="13" viewBox="0 0 23 13"><path d="M0.5 6 L6 0.5 H21.5 V11.5 H6 Z" fill="#d4d0c8" stroke="#fff"/><path d="M1 6.5 L6 11.5 H21.5 V0.5" fill="none" stroke="#404040"/><path d="M2 6.5 L6 10.5 H20.5 V1.5" fill="none" stroke="#808080"/></svg>
<svg class="a" style="left:0;top:566px" width="230" height="20" viewBox="0 0 230 20"><path d="M14 4 H16.600 V16 H14 Z M23.400 4 V16 L16.600 10 Z" fill="#000"/><path d="M42 3.500 L51 10 L42 16.500 Z" fill="#000"/><path d="M68 4 H71 V16 H68 Z M73.500 4 H76.500 V16 H73.500 Z" fill="#000"/><rect x="93" y="4" width="12" height="12" fill="#000"/><path d="M121.400 4 V16 L127.800 10 Z M127.600 4 H130.200 V16 H127.600 Z" fill="#000"/><circle cx="153" cy="10" r="6" fill="#800000"/><path d="M183.300 6 V11.500 C183.300 15 189.700 15 189.700 11.500 V8.500" stroke="#909090" stroke-width="2.200" fill="none"/><path d="M186.300 9 H193 L189.700 4.500 Z" fill="#909090"/><path d="M209.500 16.500 V7.500 M205.800 8.700 L209.500 7.500 C211 4.800 214 4.800 216 7.300" stroke="#000" stroke-width="1.100" fill="none"/><circle cx="205" cy="8.800" r="1.300" fill="#d4d0c8" stroke="#000" stroke-width=".9"/><circle cx="217" cy="7.800" r="1.300" fill="#d4d0c8" stroke="#000" stroke-width=".9"/></svg>
<div class="t" style="left:225px;top:567px;font-family:DejaVu Sans,sans-serif;font-size:16px;line-height:20px;letter-spacing:.95px">78.01.18 [Playing]</div>
<div class="a" style="left:1018px;top:571px;width:92px;height:3px;border:1px solid;border-color:#808080 #fff #fff #808080;background:#404040"></div>
<svg class="a" style="left:1062px;top:564px" width="12" height="21" viewBox="0 0 12 21"><path d="M0.5 0.500 H10.500 V15 L5.500 20 L0.500 15 Z" fill="#d4d0c8" stroke="#fff"/><path d="M10.500 0.500 V15 L5.500 20" fill="none" stroke="#404040"/><path d="M9.500 1.500 V14.500 L5.500 18.500" fill="none" stroke="#808080"/></svg>
<div class="a" style="left:997px;top:575px;width:8px;height:1px;background:#000;"></div>
<div class="a" style="left:1126px;top:575px;width:8px;height:1px;background:#000;"></div>
<div class="a" style="left:1129px;top:572px;width:1px;height:8px;background:#000;"></div>
<div class="a" style="left:1023px;top:586px;width:1px;height:4px;background:#000;"></div>
<div class="a" style="left:1027px;top:587px;width:1px;height:3px;background:#000;"></div>
<div class="a" style="left:1032px;top:587px;width:1px;height:3px;background:#000;"></div>
<div class="a" style="left:1037px;top:587px;width:1px;height:3px;background:#000;"></div>
<div class="a" style="left:1042px;top:587px;width:1px;height:3px;background:#000;"></div>
<div class="a" style="left:1047px;top:587px;width:1px;height:3px;background:#000;"></div>
<div class="a" style="left:1051px;top:587px;width:1px;height:3px;background:#000;"></div>
<div class="a" style="left:1056px;top:587px;width:1px;height:3px;background:#000;"></div>
<div class="a" style="left:1061px;top:587px;width:1px;height:3px;background:#000;"></div>
<div class="a" style="left:1066px;top:587px;width:1px;height:3px;background:#000;"></div>
<div class="a" style="left:1071px;top:587px;width:1px;height:3px;background:#000;"></div>
<div class="a" style="left:1075px;top:587px;width:1px;height:3px;background:#000;"></div>
<div class="a" style="left:1080px;top:587px;width:1px;height:3px;background:#000;"></div>
<div class="a" style="left:1085px;top:587px;width:1px;height:3px;background:#000;"></div>
<div class="a" style="left:1090px;top:587px;width:1px;height:3px;background:#000;"></div>
<div class="a" style="left:1095px;top:587px;width:1px;height:3px;background:#000;"></div>
<div class="a" style="left:1099px;top:587px;width:1px;height:3px;background:#000;"></div>
<div class="a" style="left:1104px;top:586px;width:1px;height:4px;background:#000;"></div>
<div class="a" style="left:7px;top:593px;width:1133px;height:1px;background:#808080;"></div>
<div class="a" style="left:7px;top:593px;width:1px;height:259px;background:#808080;"></div>
<div class="a" style="left:1139px;top:594px;width:1px;height:258px;background:#fff;"></div>
<div class="a" style="left:7px;top:851px;width:1133px;height:1px;background:#fff;"></div>
<div class="btn" style="left:14px;top:601px;width:33px;height:20px;text-align:center;padding-top:2px">...</div>
<div class="num" style="left:49px;top:601px;width:60px;height:20px;padding-top:3px">MASTER</div>
<svg class="a" style="left:108.5px;top:603px" width="16" height="16" viewBox="0 0 16 16"><circle cx="8" cy="8" r="5.8" fill="none" stroke="#800000" stroke-width="1.9"/><path d="M4 4 L12 12" stroke="#800000" stroke-width="1.9"/></svg>
<svg class="a" style="left:115px;top:626px" width="5" height="14" viewBox="0 0 5 14" preserveAspectRatio="none"><path d="M0.4 0 H4 L3.1 9.3 H1.3 Z" fill="#880000"/><rect x="0.8" y="10.8" width="2.8" height="3" fill="#880000"/></svg>
<div class="fx" style="left:112px;top:649px;color:#808080">fx</div>
<div class="sm" style="left:108px;top:667px;width:21px;text-align:center">OFF</div>
<div class="io" style="left:113px;top:686px;">I/O</div>
<div class="a" style="left:35px;top:625px;width:27px;height:166px;background:#485808"></div>
<div class="mg" style="left:35px;top:675px;width:27px;height:116px"></div>
<div class="a" style="left:35px;top:648px;width:27px;height:1px;background:#ff0000;"></div>
<div class="pk" style="left:35px;top:628px;width:27px;font-size:8.5px">+3.0</div>
<div class="pk" style="left:35px;top:783px;width:27px;font-size:8.5px">-7.6</div>
<div class="a" style="left:80px;top:625px;width:27px;height:166px;background:#485808"></div>
<div class="mg" style="left:80px;top:680px;width:27px;height:111px"></div>
<div class="a" style="left:80px;top:651px;width:27px;height:1px;background:#c0ff20;"></div>
<div class="pk" style="left:80px;top:628px;width:27px;font-size:8.5px">+3.0</div>
<div class="pk" style="left:80px;top:783px;width:27px;font-size:8.5px">-9.0</div>
<div class="sc" style="left:61px;top:627px;">+4+</div>
<div class="sc" style="left:61px;top:643px;">-0-</div>
<div class="sc" style="left:61px;top:679px;">-10-</div>
<div class="sc" style="left:61px;top:715px;">-20-</div>
<div class="sc" style="left:61px;top:751px;">-30-</div>
<div class="sc" style="left:61px;top:783px;">-40-</div>
<div class="vs" style="left:21px;top:638px;height:178px"></div>
<div class="kv" style="left:15px;top:686px"></div>
<div class="hs" style="left:43px;top:800px;width:76px"></div>
<div class="kh" style="left:69px;top:793px"></div>
<div class="t" style="left:0px;top:816px;left:auto;right:1026px;text-align:right;letter-spacing:-.22px;word-spacing:2px">0.00dB center</div>
<div class="hs" style="left:21px;top:839px;width:52px"></div>
<div class="kh" style="left:35px;top:832px"></div>
<div class="fld" style="left:83px;top:831px;width:32px;height:20px;padding-top:3px">1.0</div>
<div class="t" style="left:119px;top:835px;">x</div>
<div class="a" style="left:130px;top:599px;width:1px;height:252px;background:#fff;"></div>
<div class="a" style="left:131px;top:599px;width:1px;height:252px;background:#808080;"></div>
<svg class="a" style="left:136px;top:605px" width="14" height="12" viewBox="0 0 14 12"><path d="M0.5 11.5 V1.5 L1.5 0.5 H5.5 L6.5 2.5 H13.5 V11.5 Z" fill="#ffff00" stroke="#c00000" stroke-width="1"/></svg>
<svg class="a" style="left:170.5px;top:603px" width="16" height="16" viewBox="0 0 16 16"><circle cx="8" cy="8" r="5.8" fill="none" stroke="#800000" stroke-width="1.9"/><path d="M4 4 L12 12" stroke="#800000" stroke-width="1.9"/></svg>
<svg class="a" style="left:198px;top:604px" width="5" height="14" viewBox="0 0 5 14" preserveAspectRatio="none"><path d="M0.4 0 H4 L3.1 9.3 H1.3 Z" fill="#880000"/><rect x="0.8" y="10.8" width="2.8" height="3" fill="#880000"/></svg>
<div class="fld" style="left:134px;top:623px;width:75px;height:20px;padding-top:3px;padding-left:3px">drums</div>
<div class="mt" style="left:159px;top:646px;width:24px;height:155px"></div>
<div class="mg" style="left:159px;top:727px;width:11px;height:74px"></div>
<div class="a" style="left:159px;top:672px;width:11px;height:1px;background:#c0ff20;"></div>
<div class="mg" style="left:172px;top:736px;width:11px;height:65px"></div>
<div class="a" style="left:172px;top:674px;width:11px;height:1px;background:#c0ff20;"></div>
<div class="a" style="left:170px;top:646px;width:2px;height:155px;background:#000;"></div>
<div class="pk" style="left:159px;top:651px;width:24px">+0.3</div>
<div class="fx" style="left:191px;top:649px;color:#808080">fx</div>
<div class="sm" style="left:187px;top:667px;width:21px;text-align:center">OFF</div>
<div class="io" style="left:192px;top:686px;">I/O</div>
<div class="rec" style="left:191px;top:747px"></div>
<svg class="a" style="left:191px;top:764px" width="16" height="16" viewBox="0 0 16 16"><path d="M1.500 5.500 H4.500 L10 2.800 V13.200 L4.500 10.500 H1.500 Z" fill="#000"/><path d="M0.500 3 L10.500 13 M10.500 3 L0.500 13" stroke="#ff0000" stroke-width="1"/></svg>
<div class="ri" style="left:185px;top:785px">REC<br><span style="letter-spacing:2px;margin-left:2px">IN</span></div>
<div class="vs" style="left:145px;top:658px;height:131px"></div>
<div class="tk" style="left:137px;top:708px;width:21px;height:1px"></div>
<div class="kv" style="left:139px;top:690px"></div>
<div class="hs" style="left:143px;top:816px;width:58px"></div>
<div class="tk" style="left:172px;top:805px;width:1px;height:25px"></div>
<div class="kh" style="left:160px;top:809px"></div>
<div class="t" style="left:131px;top:834px;width:81px;text-align:center;letter-spacing:-.22px">0.00dB center</div>
<div class="a" style="left:210px;top:599px;width:1px;height:252px;background:#fff;"></div>
<div class="a" style="left:211px;top:599px;width:1px;height:252px;background:#808080;"></div>
<div class="num" style="left:216px;top:601px;width:33px;height:20px;padding-top:3px">1</div>
<svg class="a" style="left:251.5px;top:603px" width="16" height="16" viewBox="0 0 16 16"><circle cx="8" cy="8" r="5.8" fill="#ffff00" stroke="#ff0000" stroke-width="1.9"/><path d="M4 4 L12 12" stroke="#ff0000" stroke-width="1.9"/></svg>
<svg class="a" style="left:279px;top:604px" width="5" height="14" viewBox="0 0 5 14" preserveAspectRatio="none"><path d="M0.4 0 H4 L3.1 9.3 H1.3 Z" fill="#880000"/><rect x="0.8" y="10.8" width="2.8" height="3" fill="#880000"/></svg>
<div class="fld" style="left:215px;top:623px;width:75px;height:20px;padding-top:3px;padding-left:3px">click</div>
<div class="a" style="left:240px;top:646px;width:24px;height:155px;background:#808080;"></div>
<div class="pk" style="left:240px;top:719px;width:24px;text-align:center;font-size:6.500px;color:#e8e8e8">MUTE</div>
<div class="fx" style="left:272px;top:649px;color:#808080">fx</div>
<div class="sm" style="left:268px;top:667px;width:21px;text-align:center">OFF</div>
<div class="io" style="left:273px;top:686px;">I/O</div>
<div class="rec" style="left:272px;top:747px"></div>
<svg class="a" style="left:272px;top:764px" width="16" height="16" viewBox="0 0 16 16"><path d="M1.500 5.500 H4.500 L10 2.800 V13.200 L4.500 10.500 H1.500 Z" fill="#000"/><path d="M0.500 3 L10.500 13 M10.500 3 L0.500 13" stroke="#ff0000" stroke-width="1"/></svg>
<div class="ri" style="left:266px;top:785px">REC<br><span style="letter-spacing:2px;margin-left:2px">IN</span></div>
<div class="vs" style="left:226px;top:658px;height:131px"></div>
<div class="tk" style="left:218px;top:708px;width:21px;height:1px"></div>
<div class="kv" style="left:220px;top:663px"></div>
<div class="hs" style="left:224px;top:816px;width:58px"></div>
<div class="tk" style="left:253px;top:805px;width:1px;height:25px"></div>
<div class="kh" style="left:241px;top:809px"></div>
<div class="t" style="left:212px;top:834px;width:81px;text-align:center;letter-spacing:-.22px">+4.71dB center</div>
<div class="a" style="left:291px;top:599px;width:1px;height:252px;background:#fff;"></div>
<div class="a" style="left:292px;top:599px;width:1px;height:252px;background:#808080;"></div>
<div class="num" style="left:297px;top:601px;width:33px;height:20px;padding-top:3px">2</div>
<svg class="a" style="left:332.5px;top:603px" width="16" height="16" viewBox="0 0 16 16"><circle cx="8" cy="8" r="5.8" fill="none" stroke="#800000" stroke-width="1.9"/><path d="M4 4 L12 12" stroke="#800000" stroke-width="1.9"/></svg>
<svg class="a" style="left:360px;top:604px" width="5" height="14" viewBox="0 0 5 14" preserveAspectRatio="none"><path d="M0.4 0 H4 L3.1 9.3 H1.3 Z" fill="#880000"/><rect x="0.8" y="10.8" width="2.8" height="3" fill="#880000"/></svg>
<div class="fld" style="left:296px;top:623px;width:75px;height:20px;padding-top:3px;padding-left:3px">bass</div>
<div class="mt" style="left:321px;top:646px;width:24px;height:155px"></div>
<div class="mg" style="left:321px;top:715px;width:11px;height:86px"></div>
<div class="a" style="left:321px;top:712px;width:11px;height:1px;background:#c0ff20;"></div>
<div class="mg" style="left:334px;top:719px;width:11px;height:82px"></div>
<div class="a" style="left:334px;top:717px;width:11px;height:1px;background:#c0ff20;"></div>
<div class="a" style="left:332px;top:646px;width:2px;height:155px;background:#000;"></div>
<div class="pk" style="left:321px;top:651px;width:24px">-7.9</div>
<div class="fx" style="left:353px;top:649px;color:#000">fx</div>
<div class="sm" style="left:349px;top:667px;width:21px;text-align:center">ON</div>
<div class="io" style="left:354px;top:686px;">I/O</div>
<div class="rec" style="left:353px;top:747px"></div>
<svg class="a" style="left:353px;top:764px" width="16" height="16" viewBox="0 0 16 16"><path d="M0 5 H4 L8 1 V14 L4 10 H0 Z" fill="#000"/><path d="M10 4 L14 1 M10.5 6.5 L15 5.5 M10.5 8.5 L15 9.5 M10 11 L14 14" stroke="#000" stroke-width="1"/><path d="M10 5 L14 2 M10.5 7.5 L15 6.5 M10.5 9.5 L15 10.5 M10 12 L14 15" stroke="#f0e000" stroke-width="1"/></svg>
<div class="ri" style="left:347px;top:785px">REC<br><span style="letter-spacing:2px;margin-left:2px">IN</span></div>
<div class="vs" style="left:307px;top:658px;height:131px"></div>
<div class="tk" style="left:299px;top:708px;width:21px;height:1px"></div>
<div class="kv" style="left:301px;top:715px"></div>
<div class="hs" style="left:305px;top:816px;width:58px"></div>
<div class="tk" style="left:334px;top:805px;width:1px;height:25px"></div>
<div class="kh" style="left:322px;top:809px"></div>
<div class="t" style="left:293px;top:834px;width:81px;text-align:center;letter-spacing:-.22px">-4.08dB center</div>
<div class="a" style="left:372px;top:599px;width:1px;height:252px;background:#fff;"></div>
<div class="a" style="left:373px;top:599px;width:1px;height:252px;background:#808080;"></div>
<div class="num" style="left:378px;top:601px;width:33px;height:20px;padding-top:3px">3</div>
<svg class="a" style="left:413.5px;top:603px" width="16" height="16" viewBox="0 0 16 16"><circle cx="8" cy="8" r="5.8" fill="none" stroke="#800000" stroke-width="1.9"/><path d="M4 4 L12 12" stroke="#800000" stroke-width="1.9"/></svg>
<svg class="a" style="left:441px;top:604px" width="5" height="14" viewBox="0 0 5 14" preserveAspectRatio="none"><path d="M0.4 0 H4 L3.1 9.3 H1.3 Z" fill="#880000"/><rect x="0.8" y="10.8" width="2.8" height="3" fill="#880000"/></svg>
<div class="fld" style="left:377px;top:623px;width:75px;height:20px;padding-top:3px;padding-left:3px">guitar</div>
<div class="mt" style="left:402px;top:646px;width:24px;height:155px"></div>
<div class="a" style="left:413px;top:646px;width:2px;height:155px;background:#000;"></div>
<div class="pk" style="left:402px;top:651px;width:24px">-83.2</div>
<div class="fx" style="left:434px;top:649px;color:#000">fx</div>
<div class="sm" style="left:430px;top:667px;width:21px;text-align:center">ON</div>
<div class="io" style="left:435px;top:686px;">I/O</div>
<div class="rec on" style="left:434px;top:747px"></div>
<svg class="a" style="left:434px;top:764px" width="16" height="16" viewBox="0 0 16 16"><path d="M0 5 H4 L8 1 V14 L4 10 H0 Z" fill="#000"/><path d="M10 4 L14 1 M10.5 6.5 L15 5.5 M10.5 8.5 L15 9.5 M10 11 L14 14" stroke="#000" stroke-width="1"/><path d="M10 5 L14 2 M10.5 7.5 L15 6.5 M10.5 9.5 L15 10.5 M10 12 L14 15" stroke="#f0e000" stroke-width="1"/></svg>
<div class="ri" style="left:428px;top:785px">REC<br><span style="letter-spacing:2px;margin-left:2px">IN</span></div>
<div class="vs" style="left:388px;top:658px;height:131px"></div>
<div class="tk" style="left:380px;top:708px;width:21px;height:1px"></div>
<div class="kv" style="left:382px;top:690px"></div>
<div class="hs" style="left:386px;top:816px;width:58px"></div>
<div class="tk" style="left:415px;top:805px;width:1px;height:25px"></div>
<div class="kh" style="left:403px;top:809px"></div>
<div class="t" style="left:374px;top:834px;width:81px;text-align:center;letter-spacing:-.22px">0.00dB center</div>
<div class="a" style="left:453px;top:599px;width:1px;height:252px;background:#fff;"></div>
<div class="a" style="left:454px;top:599px;width:1px;height:252px;background:#808080;"></div>
<div class="num" style="left:459px;top:601px;width:33px;height:20px;padding-top:3px">4</div>
<svg class="a" style="left:494.5px;top:603px" width="16" height="16" viewBox="0 0 16 16"><circle cx="8" cy="8" r="5.8" fill="none" stroke="#800000" stroke-width="1.9"/><path d="M4 4 L12 12" stroke="#800000" stroke-width="1.9"/></svg>
<svg class="a" style="left:522px;top:604px" width="5" height="14" viewBox="0 0 5 14" preserveAspectRatio="none"><path d="M0.4 0 H4 L3.1 9.3 H1.3 Z" fill="#880000"/><rect x="0.8" y="10.8" width="2.8" height="3" fill="#880000"/></svg>
<div class="fld" style="left:458px;top:623px;width:75px;height:20px;padding-top:3px;padding-left:3px">vox</div>
<div class="mt" style="left:483px;top:646px;width:24px;height:155px"></div>
<div class="mg" style="left:483px;top:749px;width:11px;height:52px"></div>
<div class="a" style="left:483px;top:712px;width:11px;height:1px;background:#c0ff20;"></div>
<div class="mg" style="left:496px;top:747px;width:11px;height:54px"></div>
<div class="a" style="left:496px;top:715px;width:11px;height:1px;background:#c0ff20;"></div>
<div class="a" style="left:494px;top:646px;width:2px;height:155px;background:#000;"></div>
<div class="pk" style="left:483px;top:651px;width:24px">+3.0</div>
<div class="fx" style="left:515px;top:649px;color:#000">fx</div>
<div class="sm" style="left:511px;top:667px;width:21px;text-align:center">ON</div>
<div class="io" style="left:516px;top:686px;">I/O</div>
<div class="rec" style="left:515px;top:747px"></div>
<svg class="a" style="left:515px;top:764px" width="16" height="16" viewBox="0 0 16 16"><path d="M1.500 5.500 H4.500 L10 2.800 V13.200 L4.500 10.500 H1.500 Z" fill="#000"/><path d="M0.500 3 L10.500 13 M10.500 3 L0.500 13" stroke="#ff0000" stroke-width="1"/></svg>
<div class="ri" style="left:509px;top:785px">REC<br><span style="letter-spacing:2px;margin-left:2px">IN</span></div>
<div class="vs" style="left:469px;top:658px;height:131px"></div>
<div class="tk" style="left:461px;top:708px;width:21px;height:1px"></div>
<div class="kv" style="left:463px;top:683px"></div>
<div class="hs" style="left:467px;top:816px;width:58px"></div>
<div class="tk" style="left:496px;top:805px;width:1px;height:25px"></div>
<div class="kh" style="left:484px;top:809px"></div>
<div class="t" style="left:455px;top:834px;width:81px;text-align:center;letter-spacing:-.22px">+0.04dB center</div>
<div class="a" style="left:534px;top:599px;width:1px;height:252px;background:#fff;"></div>
<div class="a" style="left:535px;top:599px;width:1px;height:252px;background:#808080;"></div>
<div class="num" style="left:540px;top:601px;width:33px;height:20px;padding-top:3px">6</div>
<svg class="a" style="left:575.5px;top:603px" width="16" height="16" viewBox="0 0 16 16"><circle cx="8" cy="8" r="5.8" fill="none" stroke="#800000" stroke-width="1.9"/><path d="M4 4 L12 12" stroke="#800000" stroke-width="1.9"/></svg>
<svg class="a" style="left:603px;top:604px" width="5" height="14" viewBox="0 0 5 14" preserveAspectRatio="none"><path d="M0.4 0 H4 L3.1 9.3 H1.3 Z" fill="#880000"/><rect x="0.8" y="10.8" width="2.8" height="3" fill="#880000"/></svg>
<div class="fld" style="left:539px;top:623px;width:75px;height:20px;padding-top:3px;padding-left:3px">drum loopage</div>
<div class="mt" style="left:564px;top:646px;width:24px;height:155px"></div>
<div class="a" style="left:575px;top:646px;width:2px;height:155px;background:#000;"></div>
<div class="pk" style="left:564px;top:651px;width:24px">-1.9</div>
<div class="fx" style="left:596px;top:649px;color:#000">fx</div>
<div class="sm" style="left:592px;top:667px;width:21px;text-align:center">ON</div>
<div class="io" style="left:597px;top:686px;">I/O</div>
<div class="rec" style="left:596px;top:747px"></div>
<svg class="a" style="left:596px;top:764px" width="16" height="16" viewBox="0 0 16 16"><path d="M1.500 5.500 H4.500 L10 2.800 V13.200 L4.500 10.500 H1.500 Z" fill="#000"/><path d="M0.500 3 L10.500 13 M10.500 3 L0.500 13" stroke="#ff0000" stroke-width="1"/></svg>
<div class="ri" style="left:590px;top:785px">REC<br><span style="letter-spacing:2px;margin-left:2px">IN</span></div>
<div class="vs" style="left:550px;top:658px;height:131px"></div>
<div class="tk" style="left:542px;top:708px;width:21px;height:1px"></div>
<div class="kv" style="left:544px;top:682px"></div>
<div class="hs" style="left:548px;top:816px;width:58px"></div>
<div class="tk" style="left:577px;top:805px;width:1px;height:25px"></div>
<div class="kh" style="left:565px;top:809px"></div>
<div class="t" style="left:536px;top:834px;width:81px;text-align:center;letter-spacing:-.22px">+0.09dB center</div>
<div class="a" style="left:615px;top:599px;width:1px;height:252px;background:#fff;"></div>
<div class="a" style="left:616px;top:599px;width:1px;height:252px;background:#808080;"></div>
<div class="num" style="left:621px;top:601px;width:33px;height:20px;padding-top:3px">7</div>
<svg class="a" style="left:656.5px;top:603px" width="16" height="16" viewBox="0 0 16 16"><circle cx="8" cy="8" r="5.8" fill="none" stroke="#800000" stroke-width="1.9"/><path d="M4 4 L12 12" stroke="#800000" stroke-width="1.9"/></svg>
<svg class="a" style="left:684px;top:604px" width="5" height="14" viewBox="0 0 5 14" preserveAspectRatio="none"><path d="M0.4 0 H4 L3.1 9.3 H1.3 Z" fill="#880000"/><rect x="0.8" y="10.8" width="2.8" height="3" fill="#880000"/></svg>
<div class="fld" style="left:620px;top:623px;width:75px;height:20px;padding-top:3px;padding-left:3px">midi drums</div>
<div class="mt" style="left:645px;top:646px;width:24px;height:155px"></div>
<div class="mg" style="left:645px;top:727px;width:11px;height:74px"></div>
<div class="a" style="left:645px;top:672px;width:11px;height:1px;background:#c0ff20;"></div>
<div class="mg" style="left:658px;top:736px;width:11px;height:65px"></div>
<div class="a" style="left:658px;top:674px;width:11px;height:1px;background:#c0ff20;"></div>
<div class="a" style="left:656px;top:646px;width:2px;height:155px;background:#000;"></div>
<div class="pk" style="left:645px;top:651px;width:24px">+0.3</div>
<div class="fx" style="left:677px;top:649px;color:#000">fx</div>
<div class="sm" style="left:673px;top:667px;width:21px;text-align:center">ON</div>
<div class="io" style="left:678px;top:686px;">I/O</div>
<div class="rec" style="left:677px;top:747px"></div>
<svg class="a" style="left:677px;top:764px" width="16" height="16" viewBox="0 0 16 16"><path d="M0 5 H4 L8 1 V14 L4 10 H0 Z" fill="#000"/><path d="M10 4 L14 1 M10.5 6.5 L15 5.5 M10.5 8.5 L15 9.5 M10 11 L14 14" stroke="#000" stroke-width="1"/><path d="M10 5 L14 2 M10.5 7.5 L15 6.5 M10.5 9.5 L15 10.5 M10 12 L14 15" stroke="#f0e000" stroke-width="1"/></svg>
<div class="ri" style="left:671px;top:785px">REC<br><span style="letter-spacing:2px;margin-left:2px">IN</span></div>
<div class="vs" style="left:631px;top:658px;height:131px"></div>
<div class="tk" style="left:623px;top:708px;width:21px;height:1px"></div>
<div class="kv" style="left:625px;top:665px"></div>
<div class="hs" style="left:629px;top:816px;width:58px"></div>
<div class="tk" style="left:658px;top:805px;width:1px;height:25px"></div>
<div class="kh" style="left:646px;top:809px"></div>
<div class="t" style="left:617px;top:834px;width:81px;text-align:center;letter-spacing:-.22px">+3.51dB center</div>
<div class="a" style="left:696px;top:599px;width:1px;height:252px;background:#fff;"></div>
<div class="a" style="left:697px;top:599px;width:1px;height:252px;background:#808080;"></div>
<div class="num" style="left:702px;top:601px;width:33px;height:20px;padding-top:3px">8</div>
<svg class="a" style="left:737.5px;top:603px" width="16" height="16" viewBox="0 0 16 16"><circle cx="8" cy="8" r="5.8" fill="none" stroke="#800000" stroke-width="1.9"/><path d="M4 4 L12 12" stroke="#800000" stroke-width="1.9"/></svg>
<svg class="a" style="left:765px;top:604px" width="5" height="14" viewBox="0 0 5 14" preserveAspectRatio="none"><path d="M0.4 0 H4 L3.1 9.3 H1.3 Z" fill="#880000"/><rect x="0.8" y="10.8" width="2.8" height="3" fill="#880000"/></svg>
<div class="fld" style="left:701px;top:623px;width:75px;height:20px;padding-top:3px;padding-left:3px">leadgtr</div>
<div class="mt" style="left:726px;top:646px;width:24px;height:155px"></div>
<div class="a" style="left:737px;top:646px;width:2px;height:155px;background:#000;"></div>
<div class="pk" style="left:726px;top:651px;width:24px">-17.1</div>
<div class="fx" style="left:758px;top:649px;color:#000">fx</div>
<div class="sm" style="left:754px;top:667px;width:21px;text-align:center">ON</div>
<div class="io" style="left:759px;top:686px;">I/O</div>
<div class="rec" style="left:758px;top:747px"></div>
<svg class="a" style="left:758px;top:764px" width="16" height="16" viewBox="0 0 16 16"><path d="M1.500 5.500 H4.500 L10 2.800 V13.200 L4.500 10.500 H1.500 Z" fill="#000"/><path d="M0.500 3 L10.500 13 M10.500 3 L0.500 13" stroke="#ff0000" stroke-width="1"/></svg>
<div class="ri" style="left:752px;top:785px">REC<br><span style="letter-spacing:2px;margin-left:2px">IN</span></div>
<div class="vs" style="left:712px;top:658px;height:131px"></div>
<div class="tk" style="left:704px;top:708px;width:21px;height:1px"></div>
<div class="kv" style="left:706px;top:719px"></div>
<div class="hs" style="left:710px;top:816px;width:58px"></div>
<div class="tk" style="left:739px;top:805px;width:1px;height:25px"></div>
<div class="kh" style="left:743px;top:809px"></div>
<div class="t" style="left:698px;top:834px;width:81px;text-align:center;letter-spacing:-.22px">-6.00dB 62%R</div>
<div class="a" style="left:777px;top:599px;width:1px;height:252px;background:#fff;"></div>
<div class="a" style="left:778px;top:599px;width:1px;height:252px;background:#808080;"></div>
<div class="num" style="left:783px;top:601px;width:33px;height:20px;padding-top:3px">9</div>
<svg class="a" style="left:818.5px;top:603px" width="16" height="16" viewBox="0 0 16 16"><circle cx="8" cy="8" r="5.8" fill="none" stroke="#800000" stroke-width="1.9"/><path d="M4 4 L12 12" stroke="#800000" stroke-width="1.9"/></svg>
<svg class="a" style="left:846px;top:604px" width="5" height="14" viewBox="0 0 5 14" preserveAspectRatio="none"><path d="M0.4 0 H4 L3.1 9.3 H1.3 Z" fill="#880000"/><rect x="0.8" y="10.8" width="2.8" height="3" fill="#880000"/></svg>
<div class="fld" style="left:782px;top:623px;width:75px;height:20px;padding-top:3px;padding-left:3px">feedbackgtr</div>
<div class="mt" style="left:807px;top:646px;width:24px;height:155px"></div>
<div class="mg" style="left:807px;top:750px;width:11px;height:51px"></div>
<div class="a" style="left:807px;top:748px;width:11px;height:1px;background:#c0ff20;"></div>
<div class="mg" style="left:820px;top:776px;width:11px;height:25px"></div>
<div class="a" style="left:820px;top:772px;width:11px;height:1px;background:#c0ff20;"></div>
<div class="a" style="left:818px;top:646px;width:2px;height:155px;background:#000;"></div>
<div class="pk" style="left:807px;top:651px;width:24px">-23.8</div>
<div class="fx" style="left:839px;top:649px;color:#000">fx</div>
<div class="sm" style="left:835px;top:667px;width:21px;text-align:center">ON</div>
<div class="io" style="left:840px;top:686px;">I/O</div>
<div class="rec" style="left:839px;top:747px"></div>
<svg class="a" style="left:839px;top:764px" width="16" height="16" viewBox="0 0 16 16"><path d="M0 5 H4 L8 1 V14 L4 10 H0 Z" fill="#000"/><path d="M10 4 L14 1 M10.5 6.5 L15 5.5 M10.5 8.5 L15 9.5 M10 11 L14 14" stroke="#000" stroke-width="1"/><path d="M10 5 L14 2 M10.5 7.5 L15 6.5 M10.5 9.5 L15 10.5 M10 12 L14 15" stroke="#f0e000" stroke-width="1"/></svg>
<div class="ri" style="left:833px;top:785px">REC<br><span style="letter-spacing:2px;margin-left:2px">IN</span></div>
<div class="vs" style="left:793px;top:658px;height:131px"></div>
<div class="tk" style="left:785px;top:708px;width:21px;height:1px"></div>
<div class="kv" style="left:787px;top:723px"></div>
<div class="hs" style="left:791px;top:816px;width:58px"></div>
<div class="tk" style="left:820px;top:805px;width:1px;height:25px"></div>
<div class="kh" style="left:797px;top:809px"></div>
<div class="t" style="left:779px;top:834px;width:81px;text-align:center;letter-spacing:-.22px">-9.06dB 45%L</div>
<div class="a" style="left:861px;top:600px;width:79px;height:251px;background:#c0c0d8;"></div>
<div class="a" style="left:858px;top:599px;width:1px;height:252px;background:#fff;"></div>
<div class="a" style="left:859px;top:599px;width:1px;height:252px;background:#808080;"></div>
<div class="num" style="left:864px;top:601px;width:33px;height:20px;padding-top:3px">10</div>
<svg class="a" style="left:899.5px;top:603px" width="16" height="16" viewBox="0 0 16 16"><circle cx="8" cy="8" r="5.8" fill="none" stroke="#800000" stroke-width="1.9"/><path d="M4 4 L12 12" stroke="#800000" stroke-width="1.9"/></svg>
<svg class="a" style="left:927px;top:604px" width="5" height="14" viewBox="0 0 5 14" preserveAspectRatio="none"><path d="M0.4 0 H4 L3.1 9.3 H1.3 Z" fill="#880000"/><rect x="0.8" y="10.8" width="2.8" height="3" fill="#880000"/></svg>
<div class="fld" style="left:863px;top:623px;width:75px;height:20px;padding-top:3px;padding-left:3px">acoustic</div>
<div class="mt" style="left:888px;top:646px;width:24px;height:155px"></div>
<div class="a" style="left:899px;top:646px;width:2px;height:155px;background:#000;"></div>
<div class="pk" style="left:888px;top:651px;width:24px">-8.9</div>
<div class="fx" style="left:920px;top:649px;color:#808080">fx</div>
<div class="sm" style="left:916px;top:667px;width:21px;text-align:center">OFF</div>
<div class="io" style="left:921px;top:686px;">I/O</div>
<div class="rec" style="left:920px;top:747px"></div>
<svg class="a" style="left:920px;top:764px" width="16" height="16" viewBox="0 0 16 16"><path d="M1.500 5.500 H4.500 L10 2.800 V13.200 L4.500 10.500 H1.500 Z" fill="#000"/><path d="M0.500 3 L10.500 13 M10.500 3 L0.500 13" stroke="#ff0000" stroke-width="1"/></svg>
<div class="ri" style="left:914px;top:785px">REC<br><span style="letter-spacing:2px;margin-left:2px">IN</span></div>
<div class="vs" style="left:874px;top:658px;height:131px"></div>
<div class="tk" style="left:866px;top:708px;width:21px;height:1px"></div>
<div class="kv" style="left:868px;top:690px"></div>
<div class="hs" style="left:872px;top:816px;width:58px"></div>
<div class="tk" style="left:901px;top:805px;width:1px;height:25px"></div>
<div class="kh" style="left:889px;top:809px"></div>
<div class="t" style="left:860px;top:834px;width:81px;text-align:center;letter-spacing:-.22px">0.00dB center</div>
<div class="a" style="left:939px;top:599px;width:1px;height:252px;background:#fff;"></div>
<div class="a" style="left:940px;top:599px;width:1px;height:252px;background:#808080;"></div>
</body></html>
